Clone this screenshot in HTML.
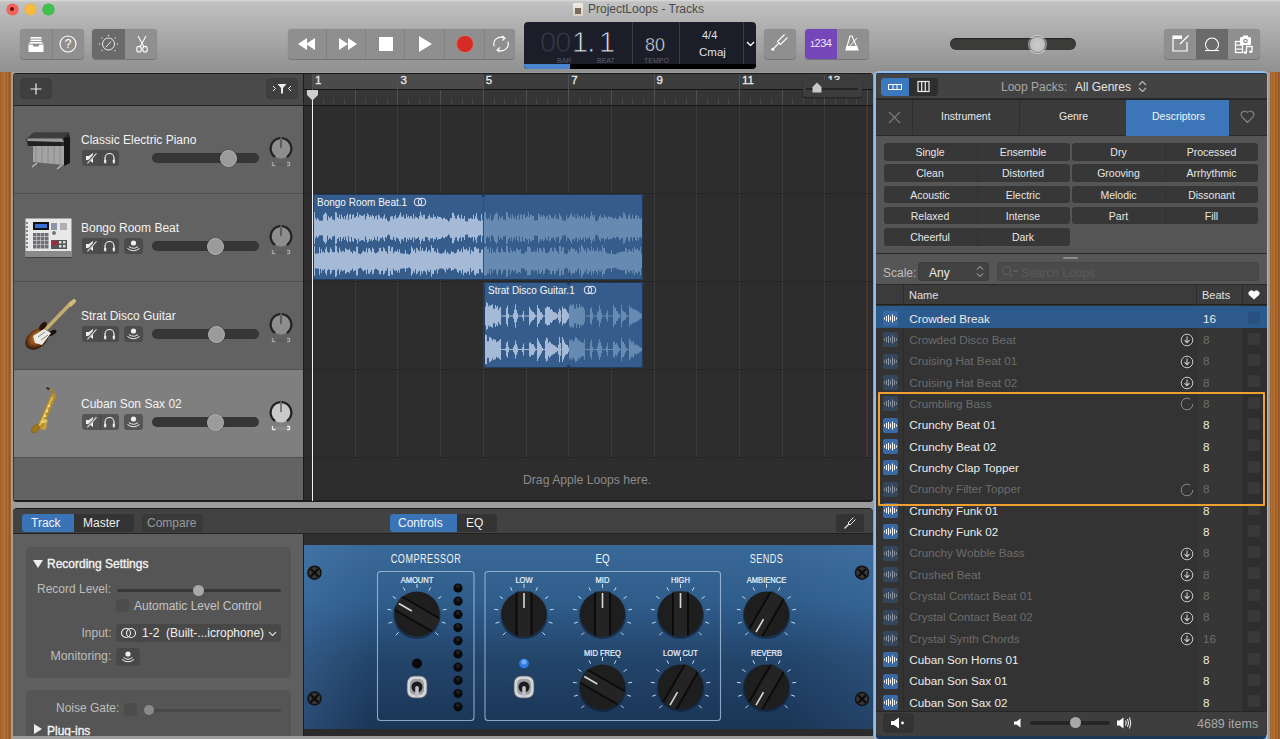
<!DOCTYPE html>
<html><head><meta charset="utf-8">
<style>
*{box-sizing:border-box;margin:0;padding:0}
html,body{width:1280px;height:739px;overflow:hidden;background:#9c9c9c;font-family:"Liberation Sans",sans-serif}
.a{position:absolute}
#tb{left:0;top:0;width:1280px;height:72px;background:linear-gradient(#dadada,#c3c3c3 2px,#bebebe 6px,#909090 72px)}
.wood{background:linear-gradient(90deg,#9a5a26,#b06e34 15%,#a0622c 28%,#bc7838 40%,#9c5c28 55%,#b27034 70%,#955624 85%,#a96a30)}
.btn{background:#8c8c8c;border-radius:4px}
.grp{background:#8f8f8f;border-radius:4px;box-shadow:0 0.5px 1px rgba(0,0,0,.25)}
.sep{background:#828282;width:1px}
.w{color:#fff}
</style></head><body>
<!-- toolbar -->
<div id="tb" class="a">
  <div class="a" style="left:6.5px;top:3.5px;width:11px;height:11px;border-radius:50%;background:#f4625c;box-shadow:0 0 0 0.6px #e4665e"><div class="a" style="left:3.5px;top:3.5px;width:4px;height:4px;border-radius:50%;background:#6a0c08"></div></div>
  <div class="a" style="left:24.5px;top:3.5px;width:11px;height:11px;border-radius:50%;background:#f7bb3e;box-shadow:0 0 0 0.6px #e8ac3a"></div>
  <div class="a" style="left:42.5px;top:3.5px;width:11px;height:11px;border-radius:50%;background:#3fc14c;box-shadow:0 0 0 0.6px #3aae44"></div>
  <div class="a" style="left:588px;top:2px;font-size:12px;color:#4a4a4a">ProjectLoops - Tracks</div>
  <div class="a" style="left:573px;top:3px;width:10px;height:13px;background:linear-gradient(#f0ece6,#d8d0c4);border-radius:1px"><div class="a" style="left:2px;top:5px;width:6px;height:6px;background:#7a6a5a"></div></div>
  <!-- group1 -->
  <div class="a grp" style="left:20px;top:29px;width:64px;height:30px"></div>
  <div class="a sep" style="left:52px;top:29px;height:30px"></div>
  <svg class="a" style="left:28px;top:35px" width="16" height="18" viewBox="0 0 16 18"><path d="M2 2h12v4H2zM1 7h14v10H1z" fill="none"/><rect x="2.5" y="2" width="11" height="1.6" fill="#fff"/><rect x="2.5" y="4.5" width="11" height="1.6" fill="#fff"/><rect x="1.5" y="7" width="13" height="1.6" fill="#fff"/><path d="M0.5 9.5h4l1 2h5l1-2h4v7.5h-15z" fill="#fff"/></svg>
  <svg class="a" style="left:59px;top:35px" width="18" height="18" viewBox="0 0 18 18"><circle cx="9" cy="9" r="8" fill="none" stroke="#fff" stroke-width="1.1"/><text x="9" y="13.2" text-anchor="middle" font-size="12" fill="#fff" font-family="Liberation Sans">?</text></svg>
  <!-- group2 -->
  <div class="a grp" style="left:92px;top:29px;width:65px;height:30px"></div>
  <div class="a" style="left:92px;top:29px;width:33px;height:30px;background:#6a6a6a;border-radius:4px 0 0 4px"></div>
  <svg class="a" style="left:98px;top:34px" width="22" height="20" viewBox="0 0 22 20"><circle cx="10.5" cy="10" r="6" fill="none" stroke="#eee" stroke-width="1"/><path d="M8 13L13 7.5" stroke="#eee" stroke-width="1"/><g fill="#ddd"><circle cx="10.5" cy="1.5" r=".7"/><circle cx="4" cy="4" r=".7"/><circle cx="17" cy="4" r=".7"/><circle cx="1.5" cy="10" r=".7"/><circle cx="19.5" cy="10" r=".7"/><circle cx="4" cy="16.5" r=".7"/><circle cx="17" cy="16.5" r=".7"/></g></svg>
  <svg class="a" style="left:135px;top:35px" width="14" height="18" viewBox="0 0 14 18"><path d="M3 1L9 12M11 1L5 12" stroke="#fff" stroke-width="1.1" fill="none"/><ellipse cx="4" cy="14.2" rx="2.3" ry="2.8" fill="none" stroke="#fff" stroke-width="1.1"/><ellipse cx="10" cy="14.2" rx="2.3" ry="2.8" fill="none" stroke="#fff" stroke-width="1.1"/></svg>
  <!-- transport -->
  <div class="a grp" style="left:288px;top:29px;width:227px;height:30px"></div>
  <div class="a sep" style="left:326px;top:29px;height:30px"></div>
  <div class="a sep" style="left:365px;top:29px;height:30px"></div>
  <div class="a sep" style="left:404px;top:29px;height:30px"></div>
  <div class="a sep" style="left:444px;top:29px;height:30px"></div>
  <div class="a sep" style="left:484px;top:29px;height:30px"></div>
  <svg class="a" style="left:298px;top:38px" width="20" height="12" viewBox="0 0 20 12"><path d="M0 6L9 0V12zM8 6L17 0V12z" fill="#fff"/></svg>
  <svg class="a" style="left:339px;top:38px" width="20" height="12" viewBox="0 0 20 12"><path d="M0 0L9 6L0 12zM9 0L18 6L9 12z" fill="#fff"/></svg>
  <div class="a" style="left:379px;top:37px;width:14px;height:14px;background:#fff"></div>
  <svg class="a" style="left:419px;top:36px" width="14" height="16" viewBox="0 0 14 16"><path d="M0 0L13 8L0 16z" fill="#fff"/></svg>
  <div class="a" style="left:456.5px;top:36px;width:16px;height:16px;border-radius:50%;background:#d62c25;box-shadow:0 0 0 1px rgba(235,110,95,.6)"></div>
  <svg class="a" style="left:491px;top:35px" width="20" height="18" viewBox="0 0 20 18"><path d="M3.2 11.5A7 7 0 0 1 13 3M16.8 6.5A7 7 0 0 1 7 15" fill="none" stroke="#fff" stroke-width="1.1"/><path d="M11 1L14 3L11.5 5.5M9 12.5L6 15L8.5 17" fill="none" stroke="#fff" stroke-width="1.1"/></svg>
  <!-- LCD -->
  <div class="a" style="left:524px;top:22px;width:232px;height:47px;background:#1b1d29;border-radius:4px;overflow:hidden">
    <div class="a" style="left:0;top:42px;width:232px;height:5px;background:#000"></div>
    <div class="a" style="left:0;top:42px;width:46px;height:5px;background:#4a86d0"></div>
    <div class="a" style="left:108px;top:0;width:1px;height:42px;background:#3a3c48"></div>
    <div class="a" style="left:155px;top:0;width:1px;height:42px;background:#3a3c48"></div>
    <div class="a" style="left:219px;top:0;width:1px;height:42px;background:#3a3c48"></div>
    <div class="a" style="left:16px;top:4px;font-size:29px;color:#383b4a;letter-spacing:-1px;-webkit-text-stroke:0.9px #1b1d29">00</div>
    <div class="a" style="left:48px;top:4px;font-size:29px;color:#dde1ec;letter-spacing:-1px;-webkit-text-stroke:0.9px #1b1d29">1.</div>
    <div class="a" style="left:75px;top:4px;font-size:29px;color:#dde1ec;-webkit-text-stroke:0.9px #1b1d29">1</div>
    <div class="a" style="left:33px;top:35px;font-size:7px;color:#5c5f6c">BAR</div>
    <div class="a" style="left:73px;top:35px;font-size:7px;color:#5c5f6c">BEAT</div>
    <div class="a" style="left:120px;top:35px;font-size:7px;color:#5c5f6c">TEMPO</div>
    <div class="a" style="left:121px;top:13px;font-size:18px;color:#e4e7ef;-webkit-text-stroke:0.5px #1b1d29">80</div>
    <div class="a" style="left:178px;top:7px;font-size:11px;color:#dfe2ea">4/4</div>
    <div class="a" style="left:175px;top:24px;font-size:11.5px;color:#dfe2ea">Cmaj</div>
    <svg class="a" style="left:222px;top:19px" width="9" height="6" viewBox="0 0 9 6"><path d="M1 1L4.5 4.5L8 1" fill="none" stroke="#fff" stroke-width="1.3"/></svg>
  </div>
  <!-- tuner -->
  <div class="a grp" style="left:764px;top:29px;width:32px;height:30px"></div>
  <svg class="a" style="left:771px;top:33px" width="18" height="20" viewBox="0 0 18 20"><path d="M1.5 16.5L8 10" stroke="#fff" stroke-width="1.1"/><circle cx="1.8" cy="16.3" r="1.5" fill="#fff"/><path d="M8 10L6.5 8.5L13.5 1.5M8 10L9.5 11.5L16.5 4.5" fill="none" stroke="#fff" stroke-width="1.1"/></svg>
  <!-- count-in / metronome -->
  <div class="a grp" style="left:805px;top:29px;width:64px;height:30px"></div>
  <div class="a" style="left:805px;top:29px;width:32px;height:30px;background:#7446b8;border-radius:4px 0 0 4px"></div>
  <div class="a" style="left:810px;top:37px;font-size:11px;color:#f0e8ff;letter-spacing:-0.5px"><span style="font-size:9px">1</span>2<span>3</span>4</div>
  <svg class="a" style="left:845px;top:35px" width="14" height="16" viewBox="0 0 14 16"><path d="M5 1H7L13 15H1z" fill="none" stroke="#fff" stroke-width="1.1"/><path d="M1.5 11H12.5L13 15H1z" fill="#fff"/><path d="M4 12L12 3" stroke="#fff" stroke-width="1"/></svg>
  <!-- master volume -->
  <div class="a" style="left:950px;top:38px;width:126px;height:12px;background:#3b3c39;border-radius:6px;box-shadow:inset 0 1px 1px rgba(0,0,0,.4)"></div>
  <div class="a" style="left:1029px;top:36px;width:17px;height:17px;border-radius:50%;background:radial-gradient(#cdcdcd,#b8b8b8);border:1px solid #8a8a8a;box-shadow:0 0 0 1px rgba(255,255,255,.5)"></div>
  <!-- right group -->
  <div class="a grp" style="left:1164px;top:29px;width:96px;height:30px"></div>
  <div class="a" style="left:1196px;top:29px;width:32px;height:30px;background:#6a6a6a"></div>
  <svg class="a" style="left:1171px;top:34px" width="20" height="20" viewBox="0 0 20 20"><path d="M11 2H2V17H16V8" fill="none" stroke="#fff" stroke-width="1.2"/><rect x="2" y="2" width="9" height="3" fill="#fff"/><path d="M9 10L17.5 1.5" stroke="#fff" stroke-width="1.2"/></svg>
  <svg class="a" style="left:1203px;top:35px" width="18" height="18" viewBox="0 0 18 18"><path d="M5.5 15A6.5 6.5 0 1 1 12.5 15" fill="none" stroke="#fff" stroke-width="1.1"/><path d="M2 15.5H16" stroke="#fff" stroke-width="1.1"/></svg>
  <svg class="a" style="left:1232px;top:33px" width="24" height="22" viewBox="0 0 24 22"><rect x="3.5" y="8.5" width="7" height="11" fill="none" stroke="#fff" stroke-width="1.3"/><rect x="3" y="11.5" width="8" height="1.2" fill="#fff"/><rect x="3" y="15.5" width="8" height="1.2" fill="#fff"/><rect x="8" y="4" width="11" height="8" rx="1.2" fill="#fff"/><rect x="11" y="2.5" width="5" height="2" fill="#fff"/><circle cx="13.5" cy="8" r="2.3" fill="#8f8f8f"/><circle cx="13.5" cy="8" r="1.1" fill="#fff"/><path d="M14.5 19.5V13.5H20V18.5" fill="none" stroke="#fff" stroke-width="1.3"/><ellipse cx="13.3" cy="19.6" rx="1.7" ry="1.3" fill="#fff"/><ellipse cx="18.8" cy="18.7" rx="1.7" ry="1.3" fill="#fff"/></svg>

</div>
<!-- TRACKS -->
<div class="a" style="left:13px;top:73px;width:860px;height:429px;background:#2c2c2c;border-radius:4px 4px 4px 4px;overflow:hidden">
<div class="a" style="left:0;top:0;width:290px;height:428px;background:#626262"></div>
<div class="a" style="left:0;top:0;width:290px;height:32px;background:#4a4a4a;border-top:1px solid #1a1a1a"></div>
<div class="a" style="left:8px;top:6px;width:30px;height:18.5px;background:#3f3f3f;border-radius:3px;box-shadow:0 0 0 0.5px #333"></div>
<svg class="a" style="left:17px;top:9.5px" width="12" height="12" viewBox="0 0 12 12"><path d="M6 0.5V11.5M0.5 6H11.5" stroke="#eee" stroke-width="1.2"/></svg>
<div class="a" style="left:254px;top:6px;width:30px;height:18.5px;background:#3f3f3f;border-radius:3px;box-shadow:0 0 0 0.5px #333"></div>
<svg class="a" style="left:259px;top:10px" width="20" height="11" viewBox="0 0 20 11"><path d="M1 3L3.5 5.5L1 8M19 3L16.5 5.5L19 8" fill="none" stroke="#eee" stroke-width="1"/><path d="M5.5 1H14.5L11 5V10.5H9V5z" fill="#eee"/></svg>
<div class="a" style="left:0;top:32px;width:290px;height:88px;background:#626262;border-top:1px solid #222"></div>
<div class="a" style="left:68px;top:60px;font-size:12px;color:#f2f2f2;white-space:nowrap">Classic Electric Piano</div>
<div class="a" style="left:69px;top:77px;width:37px;height:16px;background:#4c4c4c;border-radius:3px"></div>
<div class="a" style="left:87px;top:77px;width:1px;height:16px;background:#444"></div>
<svg class="a" style="left:72px;top:79px" width="13" height="12" viewBox="0 0 13 12"><path d="M1 4H4L8 1V11L4 8H1z" fill="#eee"/><path d="M2 11L11 1" stroke="#626262" stroke-width="2"/><path d="M2.5 11.5L11.5 1.5" stroke="#eee" stroke-width="1"/></svg>
<svg class="a" style="left:90px;top:79px" width="13" height="12" viewBox="0 0 13 12"><path d="M2 10V6A4.5 4.5 0 0 1 11 6V10" fill="none" stroke="#eee" stroke-width="1.2"/><rect x="1.2" y="7.5" width="2" height="4" rx="0.8" fill="#eee"/><rect x="9.8" y="7.5" width="2" height="4" rx="0.8" fill="#eee"/></svg>
<div class="a" style="left:139px;top:80px;width:107px;height:10px;background:#363636;border-radius:5px"></div>
<div class="a" style="left:207px;top:77px;width:17px;height:17px;border-radius:50%;background:#9b9b9b;border:1px solid #b5b5b5;box-shadow:0 0 1px rgba(0,0,0,.5)"></div>
<svg class="a" style="left:254.5px;top:64px" width="26" height="30" viewBox="0 0 26 30"><circle cx="13" cy="11.2" r="10.2" fill="#8e8e8e"/><path d="M7 20A10.4 10.4 0 1 1 19 20" fill="none" stroke="#232323" stroke-width="2.3"/><path d="M13 1V11.2" stroke="#222" stroke-width="0.9"/><path d="M13 0.5V2.5" stroke="#bbb" stroke-width="0.9"/><rect x="7" y="26" width="12" height="3" fill="#5c5c5c" rx="1"/><path d="M4.5 25V28.5H7.5M19 25.5H21.5V28.5H19" fill="none" stroke="#a0a0a0" stroke-width="1.3"/></svg>
<div class="a" style="left:0;top:120px;width:290px;height:88px;background:#626262;border-top:1px solid #505050"></div>
<div class="a" style="left:68px;top:148px;font-size:12px;color:#f2f2f2;white-space:nowrap">Bongo Room Beat</div>
<div class="a" style="left:69px;top:165px;width:37px;height:16px;background:#4c4c4c;border-radius:3px"></div>
<div class="a" style="left:87px;top:165px;width:1px;height:16px;background:#444"></div>
<svg class="a" style="left:72px;top:167px" width="13" height="12" viewBox="0 0 13 12"><path d="M1 4H4L8 1V11L4 8H1z" fill="#eee"/><path d="M2 11L11 1" stroke="#626262" stroke-width="2"/><path d="M2.5 11.5L11.5 1.5" stroke="#eee" stroke-width="1"/></svg>
<svg class="a" style="left:90px;top:167px" width="13" height="12" viewBox="0 0 13 12"><path d="M2 10V6A4.5 4.5 0 0 1 11 6V10" fill="none" stroke="#eee" stroke-width="1.2"/><rect x="1.2" y="7.5" width="2" height="4" rx="0.8" fill="#eee"/><rect x="9.8" y="7.5" width="2" height="4" rx="0.8" fill="#eee"/></svg>
<div class="a" style="left:111px;top:165px;width:19px;height:16px;background:#4c4c4c;border-radius:3px"></div>
<svg class="a" style="left:113px;top:166px" width="15" height="14" viewBox="0 0 15 14"><circle cx="7.5" cy="4" r="2.6" fill="#eee"/><path d="M3 7.5Q7.5 11 12 7.5M1.5 9.5Q7.5 14 13.5 9.5" fill="none" stroke="#eee" stroke-width="1"/></svg>
<div class="a" style="left:139px;top:168px;width:107px;height:10px;background:#363636;border-radius:5px"></div>
<div class="a" style="left:194px;top:165px;width:17px;height:17px;border-radius:50%;background:#9b9b9b;border:1px solid #b5b5b5;box-shadow:0 0 1px rgba(0,0,0,.5)"></div>
<svg class="a" style="left:254.5px;top:152px" width="26" height="30" viewBox="0 0 26 30"><circle cx="13" cy="11.2" r="10.2" fill="#8e8e8e"/><path d="M7 20A10.4 10.4 0 1 1 19 20" fill="none" stroke="#232323" stroke-width="2.3"/><path d="M13 1V11.2" stroke="#222" stroke-width="0.9"/><path d="M13 0.5V2.5" stroke="#bbb" stroke-width="0.9"/><rect x="7" y="26" width="12" height="3" fill="#5c5c5c" rx="1"/><path d="M4.5 25V28.5H7.5M19 25.5H21.5V28.5H19" fill="none" stroke="#a0a0a0" stroke-width="1.3"/></svg>
<div class="a" style="left:0;top:208px;width:290px;height:88px;background:#626262;border-top:1px solid #505050"></div>
<div class="a" style="left:68px;top:236px;font-size:12px;color:#f2f2f2;white-space:nowrap">Strat Disco Guitar</div>
<div class="a" style="left:69px;top:253px;width:37px;height:16px;background:#4c4c4c;border-radius:3px"></div>
<div class="a" style="left:87px;top:253px;width:1px;height:16px;background:#444"></div>
<svg class="a" style="left:72px;top:255px" width="13" height="12" viewBox="0 0 13 12"><path d="M1 4H4L8 1V11L4 8H1z" fill="#eee"/><path d="M2 11L11 1" stroke="#626262" stroke-width="2"/><path d="M2.5 11.5L11.5 1.5" stroke="#eee" stroke-width="1"/></svg>
<svg class="a" style="left:90px;top:255px" width="13" height="12" viewBox="0 0 13 12"><path d="M2 10V6A4.5 4.5 0 0 1 11 6V10" fill="none" stroke="#eee" stroke-width="1.2"/><rect x="1.2" y="7.5" width="2" height="4" rx="0.8" fill="#eee"/><rect x="9.8" y="7.5" width="2" height="4" rx="0.8" fill="#eee"/></svg>
<div class="a" style="left:111px;top:253px;width:19px;height:16px;background:#4c4c4c;border-radius:3px"></div>
<svg class="a" style="left:113px;top:254px" width="15" height="14" viewBox="0 0 15 14"><circle cx="7.5" cy="4" r="2.6" fill="#eee"/><path d="M3 7.5Q7.5 11 12 7.5M1.5 9.5Q7.5 14 13.5 9.5" fill="none" stroke="#eee" stroke-width="1"/></svg>
<div class="a" style="left:139px;top:256px;width:107px;height:10px;background:#363636;border-radius:5px"></div>
<div class="a" style="left:195px;top:253px;width:17px;height:17px;border-radius:50%;background:#9b9b9b;border:1px solid #b5b5b5;box-shadow:0 0 1px rgba(0,0,0,.5)"></div>
<svg class="a" style="left:254.5px;top:240px" width="26" height="30" viewBox="0 0 26 30"><circle cx="13" cy="11.2" r="10.2" fill="#8e8e8e"/><path d="M7 20A10.4 10.4 0 1 1 19 20" fill="none" stroke="#232323" stroke-width="2.3"/><path d="M13 1V11.2" stroke="#222" stroke-width="0.9"/><path d="M13 0.5V2.5" stroke="#bbb" stroke-width="0.9"/><rect x="7" y="26" width="12" height="3" fill="#5c5c5c" rx="1"/><path d="M4.5 25V28.5H7.5M19 25.5H21.5V28.5H19" fill="none" stroke="#a0a0a0" stroke-width="1.3"/></svg>
<div class="a" style="left:0;top:296px;width:290px;height:88px;background:#7f7f7f;border-top:1px solid #505050"></div>
<div class="a" style="left:68px;top:324px;font-size:12px;color:#f2f2f2;white-space:nowrap">Cuban Son Sax 02</div>
<div class="a" style="left:69px;top:341px;width:37px;height:16px;background:#555;border-radius:3px"></div>
<div class="a" style="left:87px;top:341px;width:1px;height:16px;background:#444"></div>
<svg class="a" style="left:72px;top:343px" width="13" height="12" viewBox="0 0 13 12"><path d="M1 4H4L8 1V11L4 8H1z" fill="#eee"/><path d="M2 11L11 1" stroke="#7f7f7f" stroke-width="2"/><path d="M2.5 11.5L11.5 1.5" stroke="#eee" stroke-width="1"/></svg>
<svg class="a" style="left:90px;top:343px" width="13" height="12" viewBox="0 0 13 12"><path d="M2 10V6A4.5 4.5 0 0 1 11 6V10" fill="none" stroke="#eee" stroke-width="1.2"/><rect x="1.2" y="7.5" width="2" height="4" rx="0.8" fill="#eee"/><rect x="9.8" y="7.5" width="2" height="4" rx="0.8" fill="#eee"/></svg>
<div class="a" style="left:111px;top:341px;width:19px;height:16px;background:#555;border-radius:3px"></div>
<svg class="a" style="left:113px;top:342px" width="15" height="14" viewBox="0 0 15 14"><circle cx="7.5" cy="4" r="2.6" fill="#eee"/><path d="M3 7.5Q7.5 11 12 7.5M1.5 9.5Q7.5 14 13.5 9.5" fill="none" stroke="#eee" stroke-width="1"/></svg>
<div class="a" style="left:139px;top:344px;width:107px;height:10px;background:#363636;border-radius:5px"></div>
<div class="a" style="left:194px;top:341px;width:17px;height:17px;border-radius:50%;background:#9b9b9b;border:1px solid #b5b5b5;box-shadow:0 0 1px rgba(0,0,0,.5)"></div>
<svg class="a" style="left:254.5px;top:328px" width="26" height="30" viewBox="0 0 26 30"><circle cx="13" cy="11.2" r="10.2" fill="#c9c9c9"/><path d="M7 20A10.4 10.4 0 1 1 19 20" fill="none" stroke="#232323" stroke-width="2.3"/><path d="M13 1V11.2" stroke="#222" stroke-width="0.9"/><path d="M13 0.5V2.5" stroke="#bbb" stroke-width="0.9"/><rect x="7" y="26" width="12" height="3" fill="#8a8a8a" rx="1"/><path d="M4.5 25V28.5H7.5M19 25.5H21.5V28.5H19" fill="none" stroke="#e8e8e8" stroke-width="1.3"/></svg>
<div class="a" style="left:0;top:384px;width:290px;height:44px;background:#636363;border-top:1px solid #505050"></div>
<div class="a" style="left:290px;top:0;width:1px;height:428px;background:#1c1c1c"></div>
<div class="a" style="left:291px;top:0;width:569px;height:428px;background:#2d2d2d"></div>
<div class="a" style="left:291px;top:0;width:569px;height:1px;background:#1a1a1a"></div>
<div class="a" style="left:291px;top:1px;width:569px;height:16px;background:#3c3c3c;border-bottom:1px solid #151515"></div>
<div class="a" style="left:299px;top:1px;width:171px;height:16px;background:#4b4b4b;border-bottom:1px solid #151515"></div>
<div class="a" style="left:291px;top:17px;width:569px;height:16px;background:#363636;border-bottom:1px solid #151515"></div>
<div class="a" style="left:299.0px;top:2px;width:1px;height:30px;background:#505050"></div>
<div class="a" style="left:299.0px;top:33px;width:1px;height:351px;background:#3c3c3c"></div>
<div class="a" style="left:302.0px;top:1px;font-size:11.5px;color:#e8e8e8;-webkit-text-stroke:0.3px #e8e8e8">1</div>
<div class="a" style="left:309.7px;top:25px;width:1px;height:6px;background:#464646"></div>
<div class="a" style="left:320.4px;top:25px;width:1px;height:6px;background:#464646"></div>
<div class="a" style="left:331.0px;top:25px;width:1px;height:6px;background:#464646"></div>
<div class="a" style="left:341.7px;top:17px;width:1px;height:15px;background:#505050"></div>
<div class="a" style="left:341.7px;top:33px;width:1px;height:351px;background:#3c3c3c"></div>
<div class="a" style="left:352.4px;top:25px;width:1px;height:6px;background:#464646"></div>
<div class="a" style="left:363.1px;top:25px;width:1px;height:6px;background:#464646"></div>
<div class="a" style="left:373.7px;top:25px;width:1px;height:6px;background:#464646"></div>
<div class="a" style="left:384.4px;top:2px;width:1px;height:30px;background:#505050"></div>
<div class="a" style="left:384.4px;top:33px;width:1px;height:351px;background:#3c3c3c"></div>
<div class="a" style="left:387.4px;top:1px;font-size:11.5px;color:#e8e8e8;-webkit-text-stroke:0.3px #e8e8e8">3</div>
<div class="a" style="left:395.1px;top:25px;width:1px;height:6px;background:#464646"></div>
<div class="a" style="left:405.8px;top:25px;width:1px;height:6px;background:#464646"></div>
<div class="a" style="left:416.4px;top:25px;width:1px;height:6px;background:#464646"></div>
<div class="a" style="left:427.1px;top:17px;width:1px;height:15px;background:#505050"></div>
<div class="a" style="left:427.1px;top:33px;width:1px;height:351px;background:#3c3c3c"></div>
<div class="a" style="left:437.8px;top:25px;width:1px;height:6px;background:#464646"></div>
<div class="a" style="left:448.5px;top:25px;width:1px;height:6px;background:#464646"></div>
<div class="a" style="left:459.1px;top:25px;width:1px;height:6px;background:#464646"></div>
<div class="a" style="left:469.8px;top:2px;width:1px;height:30px;background:#505050"></div>
<div class="a" style="left:469.8px;top:33px;width:1px;height:351px;background:#3c3c3c"></div>
<div class="a" style="left:472.8px;top:1px;font-size:11.5px;color:#e8e8e8;-webkit-text-stroke:0.3px #e8e8e8">5</div>
<div class="a" style="left:480.5px;top:25px;width:1px;height:6px;background:#464646"></div>
<div class="a" style="left:491.2px;top:25px;width:1px;height:6px;background:#464646"></div>
<div class="a" style="left:501.8px;top:25px;width:1px;height:6px;background:#464646"></div>
<div class="a" style="left:512.5px;top:17px;width:1px;height:15px;background:#505050"></div>
<div class="a" style="left:512.5px;top:33px;width:1px;height:351px;background:#3c3c3c"></div>
<div class="a" style="left:523.2px;top:25px;width:1px;height:6px;background:#464646"></div>
<div class="a" style="left:533.9px;top:25px;width:1px;height:6px;background:#464646"></div>
<div class="a" style="left:544.5px;top:25px;width:1px;height:6px;background:#464646"></div>
<div class="a" style="left:555.2px;top:2px;width:1px;height:30px;background:#505050"></div>
<div class="a" style="left:555.2px;top:33px;width:1px;height:351px;background:#3c3c3c"></div>
<div class="a" style="left:558.2px;top:1px;font-size:11.5px;color:#e8e8e8;-webkit-text-stroke:0.3px #e8e8e8">7</div>
<div class="a" style="left:565.9px;top:25px;width:1px;height:6px;background:#464646"></div>
<div class="a" style="left:576.6px;top:25px;width:1px;height:6px;background:#464646"></div>
<div class="a" style="left:587.2px;top:25px;width:1px;height:6px;background:#464646"></div>
<div class="a" style="left:597.9px;top:17px;width:1px;height:15px;background:#505050"></div>
<div class="a" style="left:597.9px;top:33px;width:1px;height:351px;background:#3c3c3c"></div>
<div class="a" style="left:608.6px;top:25px;width:1px;height:6px;background:#464646"></div>
<div class="a" style="left:619.3px;top:25px;width:1px;height:6px;background:#464646"></div>
<div class="a" style="left:629.9px;top:25px;width:1px;height:6px;background:#464646"></div>
<div class="a" style="left:640.6px;top:2px;width:1px;height:30px;background:#505050"></div>
<div class="a" style="left:640.6px;top:33px;width:1px;height:351px;background:#3c3c3c"></div>
<div class="a" style="left:643.6px;top:1px;font-size:11.5px;color:#e8e8e8;-webkit-text-stroke:0.3px #e8e8e8">9</div>
<div class="a" style="left:651.3px;top:25px;width:1px;height:6px;background:#464646"></div>
<div class="a" style="left:662.0px;top:25px;width:1px;height:6px;background:#464646"></div>
<div class="a" style="left:672.6px;top:25px;width:1px;height:6px;background:#464646"></div>
<div class="a" style="left:683.3px;top:17px;width:1px;height:15px;background:#505050"></div>
<div class="a" style="left:683.3px;top:33px;width:1px;height:351px;background:#3c3c3c"></div>
<div class="a" style="left:694.0px;top:25px;width:1px;height:6px;background:#464646"></div>
<div class="a" style="left:704.6px;top:25px;width:1px;height:6px;background:#464646"></div>
<div class="a" style="left:715.3px;top:25px;width:1px;height:6px;background:#464646"></div>
<div class="a" style="left:726.0px;top:2px;width:1px;height:30px;background:#505050"></div>
<div class="a" style="left:726.0px;top:33px;width:1px;height:351px;background:#3c3c3c"></div>
<div class="a" style="left:729.0px;top:1px;font-size:11.5px;color:#e8e8e8;-webkit-text-stroke:0.3px #e8e8e8">11</div>
<div class="a" style="left:736.7px;top:25px;width:1px;height:6px;background:#464646"></div>
<div class="a" style="left:747.4px;top:25px;width:1px;height:6px;background:#464646"></div>
<div class="a" style="left:758.0px;top:25px;width:1px;height:6px;background:#464646"></div>
<div class="a" style="left:768.7px;top:17px;width:1px;height:15px;background:#505050"></div>
<div class="a" style="left:768.7px;top:33px;width:1px;height:351px;background:#3c3c3c"></div>
<div class="a" style="left:779.4px;top:25px;width:1px;height:6px;background:#464646"></div>
<div class="a" style="left:790.1px;top:25px;width:1px;height:6px;background:#464646"></div>
<div class="a" style="left:800.7px;top:25px;width:1px;height:6px;background:#464646"></div>
<div class="a" style="left:811.4px;top:2px;width:1px;height:30px;background:#505050"></div>
<div class="a" style="left:811.4px;top:33px;width:1px;height:351px;background:#3c3c3c"></div>
<div class="a" style="left:814.4px;top:1px;font-size:11.5px;color:#e8e8e8;-webkit-text-stroke:0.3px #e8e8e8">13</div>
<div class="a" style="left:822.1px;top:25px;width:1px;height:6px;background:#464646"></div>
<div class="a" style="left:832.8px;top:25px;width:1px;height:6px;background:#464646"></div>
<div class="a" style="left:843.4px;top:25px;width:1px;height:6px;background:#464646"></div>
<div class="a" style="left:854.1px;top:17px;width:1px;height:15px;background:#505050"></div>
<div class="a" style="left:854.1px;top:33px;width:1px;height:351px;background:#3c3c3c"></div>
<div class="a" style="left:864.8px;top:25px;width:1px;height:6px;background:#464646"></div>
<div class="a" style="left:875.5px;top:25px;width:1px;height:6px;background:#464646"></div>
<div class="a" style="left:886.1px;top:25px;width:1px;height:6px;background:#464646"></div>
<div class="a" style="left:291px;top:120px;width:569px;height:1px;background:#262626"></div>
<div class="a" style="left:291px;top:208px;width:569px;height:1px;background:#262626"></div>
<div class="a" style="left:291px;top:296px;width:569px;height:1px;background:#262626"></div>
<div class="a" style="left:291px;top:384px;width:569px;height:1px;background:#262626"></div>
<div class="a" style="left:510px;top:399.5px;font-size:12.2px;color:#8a8a8a">Drag Apple Loops here.</div>
<div class="a" style="left:790px;top:7px;width:59px;height:17px;background:#3d3d3d;border-radius:3px;box-shadow:0 1px 2px rgba(0,0,0,.4)"></div>
<div class="a" style="left:793px;top:15px;width:52px;height:2px;background:#262626"></div>
<svg class="a" style="left:799px;top:9px" width="10" height="11" viewBox="0 0 10 11"><path d="M0.5 5L5 0.5L9.5 5V10.5H0.5z" fill="#c8c8c8"/></svg>
<div class="a" style="left:853px;top:33px;width:1px;height:351px;background:#4a3030"></div>
<div class="a" style="left:0;top:427px;width:860px;height:2px;background:#1c1c1c"></div>
<div class="a" style="left:0;top:0;width:1px;height:429px;background:#3a3a3a"></div>
</div>
<!-- /TRACKS -->
<!-- ICONS -->
<!-- piano -->
<svg class="a" style="left:24px;top:130px" width="48" height="40" viewBox="0 0 48 40">
<path d="M2 9L10 2.5H45L46 8L40 16H4z" fill="#2e2e30"/>
<path d="M2 9L10 3H44L38 10z" fill="#3e3e42"/>
<path d="M3 8.5H38L40 12H4z" fill="#9a9a9a"/>
<path d="M4 11L38 12V16H4z" fill="#222"/>
<path d="M9 16H40V35L9 32z" fill="#a3a3a3"/>
<path d="M12 16V32M18 16V33M24 16V33.5M30 16V34M36 16V34.5" stroke="#8a8a8a" stroke-width="1"/>
<path d="M40 8L46 7V33L40 36z" fill="#151515"/>
<path d="M13 33L8 37M38 35L33 39" stroke="#bdbdbd" stroke-width="1.3"/>
</svg>
<!-- mpc -->
<svg class="a" style="left:25px;top:218px" width="47" height="40" viewBox="0 0 47 40">
<rect x="0.5" y="0.5" width="46" height="33" fill="#e8e8e8"/>
<rect x="0" y="33" width="47" height="6" fill="#8a8a8a"/>
<rect x="0" y="39" width="47" height="1" fill="#333" opacity=".6"/>
<rect x="8" y="4" width="16" height="8" fill="#111"/>
<rect x="10" y="6" width="12" height="4" fill="#3a6fd8"/>
<rect x="26" y="5" width="6" height="7" fill="#8c96a8"/>
<rect x="35" y="5" width="7" height="7" fill="#b0b0b0"/>
<g fill="#707074"><rect x="8" y="15" width="3.5" height="3.5"/><rect x="12" y="15" width="3.5" height="3.5"/><rect x="16" y="15" width="3.5" height="3.5"/><rect x="20" y="15" width="3.5" height="3.5"/>
<rect x="8" y="19" width="3.5" height="3.5"/><rect x="12" y="19" width="3.5" height="3.5"/><rect x="16" y="19" width="3.5" height="3.5"/><rect x="20" y="19" width="3.5" height="3.5"/>
<rect x="8" y="23" width="3.5" height="3.5"/><rect x="12" y="23" width="3.5" height="3.5"/><rect x="16" y="23" width="3.5" height="3.5"/><rect x="20" y="23" width="3.5" height="3.5"/>
<rect x="8" y="27" width="3.5" height="3.5"/><rect x="12" y="27" width="3.5" height="3.5"/><rect x="16" y="27" width="3.5" height="3.5"/><rect x="20" y="27" width="3.5" height="3.5"/></g>
<circle cx="29" cy="15" r="2" fill="#777"/>
<rect x="26" y="22" width="16" height="9" fill="#555"/>
<rect x="27" y="23" width="6" height="4" fill="#a02a3a"/>
<g fill="#ddd"><rect x="34" y="23" width="2.5" height="2.5"/><rect x="38" y="23" width="2.5" height="2.5"/><rect x="34" y="27" width="2.5" height="2.5"/><rect x="38" y="27" width="2.5" height="2.5"/></g>
<path d="M2 4V30" stroke="#666" stroke-width="1.5" stroke-dasharray="2 2"/>
</svg>
<!-- guitar -->
<svg class="a" style="left:20px;top:297px" width="56" height="58" viewBox="0 0 56 58">
<defs><radialGradient id="sb" cx="0.55" cy="0.45" r="0.6"><stop offset="0" stop-color="#d0893c"/><stop offset="0.55" stop-color="#8a4a1c"/><stop offset="1" stop-color="#1e0e06"/></radialGradient></defs>
<path d="M26 32L51 6" stroke="#c4ad6c" stroke-width="3.6" stroke-linecap="round"/>
<path d="M48 7L54 1.5L57 4L51 10z" fill="#d2bb78"/>
<ellipse cx="17" cy="42" rx="13" ry="9" transform="rotate(-38 17 42)" fill="url(#sb)"/>
<ellipse cx="23" cy="29" rx="5" ry="2.6" transform="rotate(-50 23 29)" fill="#2a1408"/>
<ellipse cx="32" cy="36" rx="5" ry="2.2" transform="rotate(-30 32 36)" fill="#1e0e06"/>
<path d="M13 39L24 32L31 36L22 48L15 46z" fill="#ecebe4"/>
<path d="M18 40L25 35M21 43L28 38" stroke="#777" stroke-width="0.9"/>
</svg>
<!-- sax -->
<svg class="a" style="left:28px;top:386px" width="30" height="52" viewBox="0 0 30 52">
<path d="M20 2.5Q26 3 25.5 11" fill="none" stroke="#a88428" stroke-width="1.8"/>
<path d="M18.5 2L21.5 3" stroke="#2a2a2a" stroke-width="2"/>
<path d="M25.5 10L12 41" stroke="#b48c2c" stroke-width="5.5" stroke-linecap="round"/>
<path d="M24.5 11L11.5 40" stroke="#e4c45c" stroke-width="1.6"/>
<path d="M12 41Q8 49 4 46Q2 43 6 40L10 38" fill="#a07820" stroke="#8a6418" stroke-width="1"/>
<path d="M14 41Q18 45 17 36" fill="none" stroke="#c9a040" stroke-width="3"/>
<ellipse cx="16.5" cy="35" rx="3" ry="2" fill="#e0c060"/>
<g fill="#f2da80"><circle cx="21" cy="20" r="1.3"/><circle cx="19" cy="25" r="1.3"/><circle cx="17" cy="30" r="1.3"/><circle cx="14" cy="36" r="1.2"/></g>
</svg>

<!-- /ICONS -->
<!-- REGIONS -->
<svg class="a" style="left:313px;top:194px" width="330" height="86" viewBox="313 194 330 86"><defs><clipPath id="cb"><rect x="313" y="194" width="330" height="86" rx="3"/></clipPath></defs><g clip-path="url(#cb)"><rect x="313" y="194" width="330" height="86" fill="#355c8a"/><path d="M313 228.0V212.5H314H314V211.9H315H315V218.1H316H316V219.8H317H317V218.0H318H318V219.2H319H319V220.8H320H320V220.6H321H321V220.9H322H322V220.6H323H323V214.9H324H324V213.7H325H325V212.3H326H326V213.7H327H327V220.2H328H328V216.3H329H329V217.9H330H330V217.2H331H331V215.9H332H332V219.4H333H333V219.4H334H334V220.5H335H335V212.1H336H336V212.5H337H337V217.0H338H338V218.5H339H339V214.7H340H340V219.0H341H341V214.4H342H342V216.9H343H343V218.9H344H344V216.1H345H345V219.4H346H346V215.8H347H347V213.8H348H348V219.8H349H349V214.7H350H350V214.0H351H351V219.0H352H352V215.0H353H353V213.9H354H354V217.5H355H355V217.4H356H356V216.1H357H357V212.2H358H358V217.2H359H359V214.6H360H360V214.9H361H361V215.9H362H362V215.8H363H363V215.5H364H364V214.3H365H365V219.4H366H366V216.2H367H367V213.3H368H368V214.5H369H369V216.9H370H370V215.3H371H371V216.7H372H372V214.8H373H373V215.9H374H374V218.8H375H375V216.2H376H376V215.5H377H377V219.4H378H378V214.4H379H379V215.4H380H380V218.0H381H381V217.8H382H382V219.1H383H383V216.4H384H384V214.6H385H385V218.9H386H386V217.9H387H387V220.4H388H388V221.4H389H389V220.7H390H390V217.0H391H391V215.9H392H392V216.2H393H393V219.3H394H394V216.4H395H395V214.7H396H396V218.6H397H397V217.9H398H398V216.7H399H399V214.7H400H400V212.4H401H401V216.5H402H402V217.0H403H403V214.9H404H404V218.2H405H405V218.5H406H406V214.0H407H407V217.3H408H408V215.7H409H409V218.3H410H410V216.0H411H411V216.4H412H412V218.6H413H413V213.9H414H414V219.1H415H415V216.6H416H416V217.2H417H417V217.8H418H418V218.9H419H419V216.0H420H420V211.7H421H421V215.3H422H422V217.2H423H423V214.7H424H424V214.7H425H425V219.1H426H426V218.9H427H427V218.6H428H428V215.9H429H429V214.5H430H430V217.7H431H431V217.2H432H432V218.0H433H433V214.5H434H434V217.0H435H435V216.8H436H436V219.1H437H437V216.3H438H438V216.8H439H439V216.9H440H440V217.1H441H441V218.0H442H442V219.3H443H443V218.1H444H444V217.5H445H445V219.2H446H446V219.1H447H447V220.3H448H448V221.5H449H449V220.5H450H450V218.1H451H451V217.9H452H452V212.6H453H453V213.0H454H454V215.4H455H455V218.6H456H456V218.8H457H457V215.4H458H458V214.6H459H459V217.4H460H460V218.9H461H461V214.8H462H462V218.4H463H463V218.7H464H464V215.9H465H465V221.1H466H466V221.4H467H467V221.4H468H468V218.6H469H469V219.1H470H470V217.9H471H471V218.4H472H472V218.9H473H473V214.4H474H474V219.1H475H475V216.6H476H476V213.1H477H477V218.8H478H478V220.4H479H479V220.4H480H480V220.9H481H481V214.1H482H482V220.2H483H483V228.0V235.8H482V241.9H481V235.1H480V235.6H479V235.6H478V237.2H477V242.9H476V239.4H475V236.9H474V241.6H473V237.1H472V237.6H471V238.1H470V236.9H469V237.4H468V234.6H467V234.6H466V234.9H465V240.1H464V237.3H463V237.6H462V241.2H461V237.1H460V238.6H459V241.4H458V240.6H457V237.2H456V237.4H455V240.6H454V243.0H453V243.4H452V238.1H451V237.9H450V235.5H449V234.5H448V235.7H447V236.9H446V236.8H445V238.5H444V237.9H443V236.7H442V238.0H441V238.9H440V239.1H439V239.2H438V239.7H437V236.9H436V239.2H435V239.0H434V241.5H433V238.0H432V238.8H431V238.3H430V241.5H429V240.1H428V237.4H427V237.1H426V236.9H425V241.3H424V241.3H423V238.8H422V240.7H421V244.3H420V240.0H419V237.1H418V238.2H417V238.8H416V239.4H415V236.9H414V242.1H413V237.4H412V239.6H411V240.0H410V237.7H409V240.3H408V238.7H407V242.0H406V237.5H405V237.8H404V241.1H403V239.0H402V239.5H401V243.6H400V241.3H399V239.3H398V238.1H397V237.4H396V241.3H395V239.6H394V236.7H393V239.8H392V240.1H391V239.0H390V235.3H389V234.6H388V235.6H387V238.1H386V237.1H385V241.4H384V239.6H383V236.9H382V238.2H381V238.0H380V240.6H379V241.6H378V236.6H377V240.5H376V239.8H375V237.2H374V240.1H373V241.2H372V239.3H371V240.7H370V239.1H369V241.5H368V242.7H367V239.8H366V236.6H365V241.7H364V240.5H363V240.2H362V240.1H361V241.1H360V241.4H359V238.8H358V243.8H357V239.9H356V238.6H355V238.5H354V242.1H353V241.0H352V237.0H351V242.0H350V241.3H349V236.2H348V242.2H347V240.2H346V236.6H345V239.9H344V237.1H343V239.1H342V241.6H341V237.0H340V241.3H339V237.5H338V239.0H337V243.5H336V243.9H335V235.5H334V236.6H333V236.6H332V240.1H331V238.8H330V238.1H329V239.7H328V235.8H327V242.3H326V243.7H325V242.3H324V241.1H323V235.4H322V235.1H321V235.4H320V235.2H319V236.8H318V238.0H317V236.2H316V237.9H315V244.1H314V243.5H313Z" fill="#a4bad6"/><path d="M313 261.0V247.1H314H314V246.2H315H315V253.8H316H316V253.6H317H317V253.2H318H318V253.6H319H319V247.3H320H320V253.3H321H321V249.1H322H322V252.2H323H323V251.4H324H324V253.1H325H325V248.8H326H326V246.7H327H327V251.4H328H328V252.7H329H329V252.2H330H330V247.4H331H331V249.3H332H332V251.9H333H333V252.3H334H334V252.0H335H335V244.9H336H336V245.9H337H337V251.4H338H338V253.1H339H339V247.5H340H340V250.5H341H341V252.3H342H342V250.6H343H343V251.2H344H344V252.0H345H345V248.3H346H346V249.0H347H347V249.9H348H348V249.9H349H349V248.8H350H350V251.3H351H351V251.7H352H352V253.5H353H353V250.8H354H354V251.0H355H355V252.1H356H356V246.6H357H357V246.8H358H358V253.3H359H359V253.8H360H360V254.2H361H361V253.2H362H362V251.6H363H363V250.4H364H364V251.9H365H365V251.5H366H366V247.8H367H367V252.4H368H368V248.5H369H369V248.1H370H370V249.9H371H371V251.9H372H372V247.6H373H373V248.7H374H374V252.3H375H375V253.5H376H376V253.1H377H377V252.1H378H378V251.6H379H379V247.9H380H380V247.4H381H381V251.0H382H382V251.4H383H383V247.2H384H384V248.6H385H385V250.9H386H386V251.5H387H387V253.7H388H388V245.9H389H389V246.0H390H390V251.3H391H391V247.4H392H392V247.1H393H393V253.2H394H394V251.4H395H395V251.0H396H396V251.7H397H397V249.6H398H398V251.9H399H399V249.2H400H400V253.1H401H401V253.5H402H402V253.5H403H403V253.7H404H404V253.5H405H405V250.2H406H406V254.1H407H407V253.6H408H408V254.3H409H409V254.4H410H410V253.3H411H411V246.3H412H412V248.3H413H413V250.7H414H414V249.2H415H415V252.8H416H416V247.8H417H417V248.6H418H418V250.5H419H419V251.2H420H420V246.4H421H421V250.8H422H422V248.2H423H423V251.0H424H424V251.3H425H425V250.3H426H426V247.2H427H427V252.2H428H428V250.4H429H429V249.9H430H430V252.2H431H431V245.2H432H432V248.0H433H433V247.9H434H434V251.6H435H435V251.3H436H436V253.0H437H437V248.4H438H438V252.3H439H439V253.2H440H440V253.4H441H441V253.7H442H442V253.2H443H443V253.1H444H444V251.6H445H445V249.6H446H446V253.5H447H447V252.1H448H448V253.2H449H449V254.2H450H450V253.4H451H451V251.0H452H452V252.1H453H453V251.9H454H454V253.4H455H455V253.2H456H456V252.6H457H457V249.9H458H458V249.0H459H459V251.6H460H460V251.2H461H461V248.4H462H462V252.2H463H463V246.8H464H464V249.2H465H465V249.4H466H466V248.6H467H467V250.4H468H468V250.6H469H469V247.1H470H470V253.7H471H471V249.8H472H472V250.9H473H473V251.9H474H474V247.3H475H475V246.5H476H476V248.4H477H477V248.9H478H478V248.2H479H479V253.0H480H480V252.8H481H481V249.7H482H482V249.3H483H483V261.0V272.7H482V272.3H481V269.2H480V269.0H479V273.8H478V273.1H477V273.6H476V275.5H475V274.7H474V270.1H473V271.1H472V272.2H471V268.3H470V274.9H469V271.4H468V271.6H467V273.4H466V272.6H465V272.8H464V275.2H463V269.8H462V273.6H461V270.8H460V270.4H459V273.0H458V272.1H457V269.4H456V268.8H455V268.6H454V270.1H453V269.9H452V271.0H451V268.6H450V267.8H449V268.8H448V269.9H447V268.5H446V272.4H445V270.4H444V268.9H443V268.8H442V268.3H441V268.6H440V268.8H439V269.7H438V273.6H437V269.0H436V270.7H435V270.4H434V274.1H433V274.0H432V276.8H431V269.8H430V272.1H429V271.6H428V269.8H427V274.8H426V271.7H425V270.7H424V271.0H423V273.8H422V271.2H421V275.6H420V270.8H419V271.5H418V273.4H417V274.2H416V269.2H415V272.8H414V271.3H413V273.7H412V275.7H411V268.7H410V267.6H409V267.7H408V268.4H407V267.9H406V271.8H405V268.5H404V268.3H403V268.5H402V268.5H401V268.9H400V272.8H399V270.1H398V272.4H397V270.3H396V271.0H395V270.6H394V268.8H393V274.9H392V274.6H391V270.7H390V276.0H389V276.1H388V268.3H387V270.5H386V271.1H385V273.4H384V274.8H383V270.6H382V271.0H381V274.6H380V274.1H379V270.4H378V269.9H377V268.9H376V268.5H375V269.7H374V273.3H373V274.4H372V270.1H371V272.1H370V273.9H369V273.5H368V269.6H367V274.2H366V270.5H365V270.1H364V271.6H363V270.4H362V268.8H361V267.8H360V268.2H359V268.7H358V275.2H357V275.4H356V269.9H355V271.0H354V271.2H353V268.5H352V270.3H351V270.7H350V273.2H349V272.1H348V272.1H347V273.0H346V273.7H345V270.0H344V270.8H343V271.4H342V269.7H341V271.5H340V274.5H339V268.9H338V270.6H337V276.1H336V277.1H335V270.0H334V269.7H333V270.1H332V272.7H331V274.6H330V269.8H329V269.3H328V270.6H327V275.3H326V273.2H325V268.9H324V270.6H323V269.8H322V272.9H321V268.7H320V274.7H319V268.4H318V268.8H317V268.4H316V268.2H315V275.8H314V274.9H313Z" fill="#a4bad6"/><path d="M484 228.0V212.5H485H485V211.9H486H486V218.1H487H487V219.8H488H488V218.0H489H489V219.2H490H490V214.3H491H491V220.8H492H492V220.5H493H493V218.7H494H494V214.9H495H495V213.7H496H496V212.3H497H497V213.7H498H498V220.2H499H499V216.3H500H500V217.9H501H501V217.2H502H502V215.9H503H503V219.4H504H504V219.4H505H505V220.5H506H506V212.1H507H507V212.5H508H508V217.0H509H509V218.5H510H510V214.7H511H511V219.0H512H512V214.4H513H513V216.9H514H514V218.9H515H515V216.1H516H516V219.4H517H517V215.8H518H518V213.8H519H519V219.8H520H520V214.7H521H521V214.0H522H522V219.0H523H523V215.0H524H524V213.9H525H525V217.5H526H526V217.4H527H527V216.1H528H528V212.2H529H529V217.2H530H530V214.6H531H531V214.9H532H532V215.9H533H533V215.8H534H534V220.5H535H535V220.2H536H536V220.0H537H537V220.7H538H538V213.3H539H539V214.5H540H540V216.9H541H541V215.3H542H542V216.7H543H543V214.8H544H544V215.9H545H545V218.8H546H546V216.2H547H547V215.5H548H548V219.4H549H549V214.4H550H550V215.4H551H551V218.0H552H552V217.8H553H553V219.1H554H554V216.4H555H555V214.6H556H556V218.9H557H557V217.9H558H558V219.2H559H559V212.9H560H560V215.4H561H561V217.0H562H562V220.5H563H563V220.4H564H564V220.6H565H565V220.8H566H566V214.7H567H567V218.6H568H568V217.9H569H569V216.7H570H570V214.7H571H571V212.4H572H572V216.5H573H573V217.0H574H574V214.9H575H575V218.2H576H576V218.5H577H577V214.0H578H578V217.3H579H579V215.7H580H580V218.3H581H581V216.0H582H582V216.4H583H583V218.6H584H584V213.9H585H585V219.1H586H586V216.6H587H587V217.2H588H588V217.8H589H589V218.9H590H590V216.0H591H591V211.7H592H592V215.3H593H593V217.2H594H594V214.7H595H595V220.4H596H596V221.4H597H597V220.7H598H598V218.6H599H599V215.9H600H600V214.5H601H601V217.7H602H602V217.2H603H603V218.0H604H604V214.5H605H605V217.0H606H606V216.8H607H607V219.1H608H608V216.3H609H609V216.8H610H610V216.9H611H611V217.1H612H612V218.0H613H613V219.3H614H614V218.1H615H615V217.5H616H616V219.2H617H617V219.1H618H618V218.6H619H619V216.1H620H620V216.4H621H621V218.1H622H622V217.9H623H623V212.6H624H624V213.0H625H625V215.4H626H626V218.6H627H627V218.8H628H628V215.4H629H629V214.6H630H630V217.4H631H631V218.9H632H632V214.8H633H633V218.4H634H634V218.7H635H635V215.9H636H636V215.1H637H637V218.4H638H638V215.7H639H639V218.6H640H640V219.1H641H641V217.9H642H642V218.4H643H643V228.0V237.6H642V238.1H641V236.9H640V237.4H639V240.3H638V237.6H637V240.9H636V240.1H635V237.3H634V237.6H633V241.2H632V237.1H631V238.6H630V241.4H629V240.6H628V237.2H627V237.4H626V240.6H625V243.0H624V243.4H623V238.1H622V237.9H621V239.6H620V239.9H619V237.4H618V236.9H617V236.8H616V238.5H615V237.9H614V236.7H613V238.0H612V238.9H611V239.1H610V239.2H609V239.7H608V236.9H607V239.2H606V239.0H605V241.5H604V238.0H603V238.8H602V238.3H601V241.5H600V240.1H599V237.4H598V235.3H597V234.6H596V235.6H595V241.3H594V238.8H593V240.7H592V244.3H591V240.0H590V237.1H589V238.2H588V238.8H587V239.4H586V236.9H585V242.1H584V237.4H583V239.6H582V240.0H581V237.7H580V240.3H579V238.7H578V242.0H577V237.5H576V237.8H575V241.1H574V239.0H573V239.5H572V243.6H571V241.3H570V239.3H569V238.1H568V237.4H567V241.3H566V235.2H565V235.4H564V235.6H563V235.5H562V239.0H561V240.6H560V243.1H559V236.8H558V238.1H557V237.1H556V241.4H555V239.6H554V236.9H553V238.2H552V238.0H551V240.6H550V241.6H549V236.6H548V240.5H547V239.8H546V237.2H545V240.1H544V241.2H543V239.3H542V240.7H541V239.1H540V241.5H539V242.7H538V235.3H537V236.0H536V235.8H535V235.5H534V240.2H533V240.1H532V241.1H531V241.4H530V238.8H529V243.8H528V239.9H527V238.6H526V238.5H525V242.1H524V241.0H523V237.0H522V242.0H521V241.3H520V236.2H519V242.2H518V240.2H517V236.6H516V239.9H515V237.1H514V239.1H513V241.6H512V237.0H511V241.3H510V237.5H509V239.0H508V243.5H507V243.9H506V235.5H505V236.6H504V236.6H503V240.1H502V238.8H501V238.1H500V239.7H499V235.8H498V242.3H497V243.7H496V242.3H495V241.1H494V237.3H493V235.5H492V235.2H491V241.7H490V236.8H489V238.0H488V236.2H487V237.9H486V244.1H485V243.5H484Z" fill="#668ab2"/><path d="M484 261.0V247.1H485H485V246.2H486H486V246.6H487H487V248.9H488H488V248.5H489H489V252.7H490H490V247.3H491H491V253.3H492H492V249.1H493H493V252.2H494H494V251.4H495H495V253.1H496H496V248.8H497H497V246.7H498H498V251.4H499H499V252.7H500H500V252.2H501H501V247.4H502H502V249.3H503H503V251.9H504H504V252.3H505H505V252.0H506H506V244.9H507H507V245.9H508H508V251.4H509H509V253.1H510H510V247.5H511H511V250.5H512H512V252.3H513H513V250.6H514H514V251.2H515H515V252.0H516H516V248.3H517H517V249.0H518H518V249.9H519H519V249.9H520H520V248.8H521H521V253.8H522H522V253.6H523H523V253.2H524H524V253.6H525H525V251.0H526H526V252.1H527H527V246.6H528H528V246.8H529H529V246.8H530H530V247.7H531H531V251.9H532H532V252.0H533H533V251.6H534H534V250.4H535H535V251.9H536H536V251.5H537H537V247.8H538H538V252.4H539H539V248.5H540H540V248.1H541H541V249.9H542H542V251.9H543H543V247.6H544H544V248.7H545H545V252.3H546H546V253.5H547H547V253.1H548H548V252.1H549H549V251.6H550H550V247.9H551H551V247.4H552H552V251.0H553H553V251.4H554H554V247.2H555H555V248.6H556H556V250.9H557H557V251.5H558H558V253.7H559H559V245.9H560H560V246.0H561H561V251.3H562H562V247.4H563H563V247.1H564H564V253.3H565H565V253.8H566H566V254.2H567H567V253.2H568H568V249.6H569H569V251.9H570H570V249.2H571H571V247.1H572H572V248.5H573H573V248.9H574H574V248.5H575H575V251.0H576H576V250.2H577H577V252.2H578H578V254.0H579H579V247.5H580H580V252.0H581H581V244.5H582H582V246.3H583H583V248.3H584H584V250.7H585H585V249.2H586H586V252.8H587H587V247.8H588H588V248.6H589H589V250.5H590H590V251.2H591H591V246.4H592H592V250.8H593H593V248.2H594H594V251.0H595H595V251.3H596H596V250.3H597H597V247.2H598H598V252.2H599H599V250.4H600H600V249.9H601H601V252.2H602H602V245.2H603H603V248.0H604H604V247.9H605H605V251.6H606H606V253.1H607H607V253.5H608H608V253.5H609H609V253.7H610H610V253.5H611H611V250.1H612H612V254.1H613H613V253.6H614H614V254.3H615H615V254.4H616H616V253.3H617H617V253.5H618H618V252.1H619H619V252.8H620H620V252.1H621H621V251.9H622H622V251.0H623H623V252.1H624H624V251.9H625H625V247.8H626H626V248.4H627H627V252.6H628H628V249.9H629H629V249.0H630H630V251.6H631H631V251.2H632H632V248.4H633H633V252.2H634H634V246.8H635H635V249.2H636H636V249.4H637H637V248.6H638H638V250.4H639H639V250.6H640H640V247.1H641H641V253.7H642H642V249.8H643H643V261.0V272.2H642V268.3H641V274.9H640V271.4H639V271.6H638V273.4H637V272.6H636V272.8H635V275.2H634V269.8H633V273.6H632V270.8H631V270.4H630V273.0H629V272.1H628V269.4H627V273.6H626V274.2H625V270.1H624V269.9H623V271.0H622V270.1H621V269.9H620V269.2H619V269.9H618V268.5H617V268.7H616V267.6H615V267.7H614V268.4H613V267.9H612V271.9H611V268.5H610V268.3H609V268.5H608V268.5H607V268.9H606V270.4H605V274.1H604V274.0H603V276.8H602V269.8H601V272.1H600V271.6H599V269.8H598V274.8H597V271.7H596V270.7H595V271.0H594V273.8H593V271.2H592V275.6H591V270.8H590V271.5H589V273.4H588V274.2H587V269.2H586V272.8H585V271.3H584V273.7H583V275.7H582V277.5H581V270.0H580V274.5H579V268.0H578V269.8H577V271.8H576V271.0H575V273.5H574V273.1H573V273.5H572V274.9H571V272.8H570V270.1H569V272.4H568V268.8H567V267.8H566V268.2H565V268.7H564V274.9H563V274.6H562V270.7H561V276.0H560V276.1H559V268.3H558V270.5H557V271.1H556V273.4H555V274.8H554V270.6H553V271.0H552V274.6H551V274.1H550V270.4H549V269.9H548V268.9H547V268.5H546V269.7H545V273.3H544V274.4H543V270.1H542V272.1H541V273.9H540V273.5H539V269.6H538V274.2H537V270.5H536V270.1H535V271.6H534V270.4H533V270.0H532V270.1H531V274.3H530V275.2H529V275.2H528V275.4H527V269.9H526V271.0H525V268.4H524V268.8H523V268.4H522V268.2H521V273.2H520V272.1H519V272.1H518V273.0H517V273.7H516V270.0H515V270.8H514V271.4H513V269.7H512V271.5H511V274.5H510V268.9H509V270.6H508V276.1H507V277.1H506V270.0H505V269.7H504V270.1H503V272.7H502V274.6H501V269.8H500V269.3H499V270.6H498V275.3H497V273.2H496V268.9H495V270.6H494V269.8H493V272.9H492V268.7H491V274.7H490V269.3H489V273.5H488V273.1H487V275.4H486V275.8H485V274.9H484Z" fill="#668ab2"/><rect x="313" y="194" width="330" height="16" fill="#355c8a"/><path d="M483.5 194V280" stroke="#2d4f7a" stroke-width="1"/></g><rect x="313.5" y="194.5" width="329" height="85" rx="3" fill="none" stroke="#1f3a5c" stroke-width="1"/><path d="M480 194L483.5 197.5L487 194z" fill="#1f3a5c"/></svg>
<div class="a" style="left:317px;top:196.5px;font-size:10px;color:#f4f6fa;white-space:nowrap">Bongo Room Beat.1</div>
<svg class="a" style="left:413px;top:197px" width="14" height="10" viewBox="0 0 14 10"><circle cx="5" cy="5" r="3.8" fill="none" stroke="#eef" stroke-width="1"/><circle cx="9" cy="5" r="3.8" fill="none" stroke="#eef" stroke-width="1"/></svg>
<svg class="a" style="left:484px;top:282px" width="159" height="86" viewBox="484 282 159 86"><defs><clipPath id="cs"><rect x="484" y="282" width="159" height="86" rx="3"/></clipPath></defs><g clip-path="url(#cs)"><rect x="484" y="282" width="159" height="86" fill="#355c8a"/><path d="M485 316.0V306.8H486H486V302.3H487H487V303.1H488H488V306.6H489H489V305.3H490H490V305.8H491H491V304.9H492H492V304.3H493H493V308.5H494H494V309.1H495H495V304.9H496H496V307.3H497H497V305.8H498H498V309.9H499H499V307.9H500H500V306.8H501H501V315.5H502H502V315.5H503H503V315.5H504H504V315.5H505H505V315.2H506H506V308.1H507H507V305.6H508H508V313.8H509H509V315.5H510H510V315.5H511H511V315.5H512H512V315.5H513H513V313.6H514H514V309.5H515H515V304.3H516H516V310.1H517H517V313.2H518H518V315.5H519H519V315.5H520H520V315.5H521H521V315.5H522H522V314.2H523H523V311.1H524H524V315.5H525H525V315.5H526H526V315.5H527H527V315.5H528H528V315.5H529H529V306.7H530H530V309.3H531H531V310.4H532H532V311.5H533H533V312.1H534H534V313.6H535H535V315.0H536H536V315.5H537H537V304.9H538H538V308.0H539H539V309.4H540H540V312.3H541H541V312.2H542H542V314.3H543H543V315.5H544H544V315.5H545H545V308.1H546H546V307.5H547H547V306.2H548H548V307.1H549H549V306.9H550H550V309.8H551H551V309.1H552H552V310.4H553H553V312.1H554H554V312.2H555H555V312.4H556H556V313.3H557H557V314.5H558H558V311.6H559H559V308.4H560H560V310.3H561H561V315.5H562H562V306.4H563H563V308.8H564H564V308.2H565H565V308.8H566H566V310.3H567H567V312.3H568H568V313.4H569H569V316.0V318.6H568V319.7H567V321.7H566V323.2H565V323.8H564V323.2H563V325.6H562V316.5H561V321.7H560V323.6H559V320.4H558V317.5H557V318.7H556V319.6H555V319.8H554V319.9H553V321.6H552V322.9H551V322.2H550V325.1H549V324.9H548V325.8H547V324.5H546V323.9H545V316.5H544V316.5H543V317.7H542V319.8H541V319.7H540V322.6H539V324.0H538V327.1H537V316.5H536V317.0H535V318.4H534V319.9H533V320.5H532V321.6H531V322.7H530V325.3H529V316.5H528V316.5H527V316.5H526V316.5H525V316.5H524V320.9H523V317.8H522V316.5H521V316.5H520V316.5H519V316.5H518V318.8H517V321.9H516V327.7H515V322.5H514V318.4H513V316.5H512V316.5H511V316.5H510V316.5H509V318.2H508V326.4H507V323.9H506V316.8H505V316.5H504V316.5H503V316.5H502V316.5H501V325.2H500V324.1H499V322.1H498V326.2H497V324.7H496V327.1H495V322.9H494V323.5H493V327.7H492V327.1H491V326.2H490V326.7H489V325.4H488V328.9H487V329.7H486V325.2H485Z" fill="#a4bad6"/><path d="M485 349.5V334.8H486H486V335.1H487H487V341.2H488H488V341.2H489H489V336.7H490H490V337.6H491H491V338.3H492H492V340.6H493H493V339.1H494H494V339.4H495H495V339.8H496H496V342.2H497H497V341.0H498H498V341.4H499H499V340.0H500H500V339.0H501H501V349.0H502H502V349.0H503H503V349.0H504H504V349.0H505H505V348.3H506H506V343.0H507H507V341.3H508H508V346.8H509H509V349.0H510H510V349.0H511H511V349.0H512H512V349.0H513H513V347.1H514H514V344.9H515H515V340.4H516H516V343.8H517H517V346.4H518H518V349.0H519H519V349.0H520H520V349.0H521H521V349.0H522H522V347.0H523H523V343.4H524H524V349.0H525H525V349.0H526H526V349.0H527H527V349.0H528H528V349.0H529H529V342.8H530H530V342.3H531H531V344.2H532H532V344.1H533H533V344.3H534H534V346.5H535H535V348.4H536H536V349.0H537H537V338.1H538H538V340.5H539H539V342.5H540H540V343.9H541H541V346.1H542H542V347.9H543H543V349.0H544H544V349.0H545H545V340.3H546H546V337.5H547H547V338.5H548H548V343.1H549H549V341.2H550H550V342.2H551H551V343.8H552H552V344.3H553H553V345.2H554H554V344.9H555H555V346.6H556H556V346.8H557H557V348.1H558H558V344.4H559H559V336.7H560H560V343.0H561H561V349.0H562H562V337.0H563H563V339.5H564H564V341.9H565H565V344.1H566H566V344.8H567H567V345.1H568H568V347.3H569H569V349.5V351.7H568V353.9H567V354.2H566V354.9H565V357.1H564V359.5H563V362.0H562V350.0H561V356.0H560V362.3H559V354.6H558V350.9H557V352.2H556V352.4H555V354.1H554V353.8H553V354.7H552V355.2H551V356.8H550V357.8H549V355.9H548V360.5H547V361.5H546V358.7H545V350.0H544V350.0H543V351.1H542V352.9H541V355.1H540V356.5H539V358.5H538V360.9H537V350.0H536V350.6H535V352.5H534V354.7H533V354.9H532V354.8H531V356.7H530V356.2H529V350.0H528V350.0H527V350.0H526V350.0H525V350.0H524V355.6H523V352.0H522V350.0H521V350.0H520V350.0H519V350.0H518V352.6H517V355.2H516V358.6H515V354.1H514V351.9H513V350.0H512V350.0H511V350.0H510V350.0H509V352.2H508V357.7H507V356.0H506V350.7H505V350.0H504V350.0H503V350.0H502V350.0H501V360.0H500V359.0H499V357.6H498V358.0H497V356.8H496V359.2H495V359.6H494V359.9H493V358.4H492V360.7H491V361.4H490V362.3H489V357.8H488V357.8H487V363.9H486V364.2H485Z" fill="#a4bad6"/><path d="M569 316.0V306.1H570H570V304.3H571H571V305.7H572H572V304.4H573H573V304.5H574H574V308.2H575H575V308.7H576H576V304.0H577H577V307.6H578H578V307.9H579H579V304.0H580H580V307.1H581H581V305.4H582H582V307.5H583H583V307.0H584H584V309.5H585H585V315.5H586H586V315.5H587H587V315.5H588H588V315.5H589H589V315.0H590H590V308.3H591H591V307.4H592H592V312.5H593H593V315.5H594H594V315.5H595H595V315.5H596H596V315.5H597H597V312.3H598H598V311.3H599H599V305.3H600H600V309.3H601H601V313.0H602H602V315.5H603H603V315.5H604H604V315.5H605H605V315.5H606H606V313.0H607H607V310.2H608H608V315.5H609H609V315.5H610H610V315.5H611H611V315.5H612H612V315.5H613H613V304.7H614H614V307.0H615H615V307.7H616H616V311.0H617H617V311.3H618H618V313.4H619H619V314.3H620H620V315.5H621H621V304.7H622H622V310.1H623H623V311.2H624H624V312.2H625H625V312.2H626H626V314.7H627H627V315.5H628H628V315.5H629H629V305.2H630H630V307.7H631H631V307.3H632H632V308.6H633H633V309.4H634H634V309.2H635H635V309.9H636H636V309.7H637H637V311.2H638H638V311.4H639H639V312.5H640H640V313.1H641H641V314.3H642H642V312.6H643H643V303.4H644H644V316.0V328.6H643V319.4H642V317.7H641V318.9H640V319.5H639V320.6H638V320.8H637V322.3H636V322.1H635V322.8H634V322.6H633V323.4H632V324.7H631V324.3H630V326.8H629V316.5H628V316.5H627V317.3H626V319.8H625V319.8H624V320.8H623V321.9H622V327.3H621V316.5H620V317.7H619V318.6H618V320.7H617V321.0H616V324.3H615V325.0H614V327.3H613V316.5H612V316.5H611V316.5H610V316.5H609V316.5H608V321.8H607V319.0H606V316.5H605V316.5H604V316.5H603V316.5H602V319.0H601V322.7H600V326.7H599V320.7H598V319.7H597V316.5H596V316.5H595V316.5H594V316.5H593V319.5H592V324.6H591V323.7H590V317.0H589V316.5H588V316.5H587V316.5H586V316.5H585V322.5H584V325.0H583V324.5H582V326.6H581V324.9H580V328.0H579V324.1H578V324.4H577V328.0H576V323.3H575V323.8H574V327.5H573V327.6H572V326.3H571V327.7H570V325.9H569Z" fill="#668ab2"/><path d="M569 349.5V339.7H570H570V340.7H571H571V339.0H572H572V340.8H573H573V341.5H574H574V339.6H575H575V336.8H576H576V337.8H577H577V338.2H578H578V341.5H579H579V340.0H580H580V341.6H581H581V342.3H582H582V342.9H583H583V342.5H584H584V339.3H585H585V349.0H586H586V349.0H587H587V349.0H588H588V349.0H589H589V348.4H590H590V342.1H591H591V339.6H592H592V347.0H593H593V349.0H594H594V349.0H595H595V349.0H596H596V349.0H597H597V346.5H598H598V342.7H599H599V338.9H600H600V341.9H601H601V345.4H602H602V349.0H603H603V349.0H604H604V349.0H605H605V349.0H606H606V346.8H607H607V343.1H608H608V349.0H609H609V349.0H610H610V349.0H611H611V349.0H612H612V349.0H613H613V341.9H614H614V341.6H615H615V344.4H616H616V342.8H617H617V344.6H618H618V346.7H619H619V348.3H620H620V349.0H621H621V338.0H622H622V341.5H623H623V342.0H624H624V344.0H625H625V346.5H626H626V348.2H627H627V349.0H628H628V349.0H629H629V338.8H630H630V340.5H631H631V342.6H632H632V342.5H633H633V341.0H634H634V344.7H635H635V345.2H636H636V344.0H637H637V345.7H638H638V345.8H639H639V346.6H640H640V347.5H641H641V347.6H642H642V346.1H643H643V339.6H644H644V349.5V359.4H643V352.9H642V351.4H641V351.5H640V352.4H639V353.2H638V353.3H637V355.0H636V353.8H635V354.3H634V358.0H633V356.5H632V356.4H631V358.5H630V360.2H629V350.0H628V350.0H627V350.8H626V352.5H625V355.0H624V357.0H623V357.5H622V361.0H621V350.0H620V350.7H619V352.3H618V354.4H617V356.2H616V354.6H615V357.4H614V357.1H613V350.0H612V350.0H611V350.0H610V350.0H609V350.0H608V355.9H607V352.2H606V350.0H605V350.0H604V350.0H603V350.0H602V353.6H601V357.1H600V360.1H599V356.3H598V352.5H597V350.0H596V350.0H595V350.0H594V350.0H593V352.0H592V359.4H591V356.9H590V350.6H589V350.0H588V350.0H587V350.0H586V350.0H585V359.7H584V356.5H583V356.1H582V356.7H581V357.4H580V359.0H579V357.5H578V360.8H577V361.2H576V362.2H575V359.4H574V357.5H573V358.2H572V360.0H571V358.3H570V359.3H569Z" fill="#668ab2"/><rect x="484" y="282" width="160" height="16" fill="#355c8a"/></g><rect x="484.5" y="282.5" width="158" height="85" rx="3" fill="none" stroke="#1f3a5c" stroke-width="1"/><path d="M565 282L568.5 285.5L572 282zM565 368L568.5 364.5L572 368z" fill="#1f3a5c"/></svg>
<div class="a" style="left:488px;top:284.5px;font-size:10px;color:#f4f6fa;white-space:nowrap">Strat Disco Guitar.1</div>
<svg class="a" style="left:583px;top:285px" width="14" height="10" viewBox="0 0 14 10"><circle cx="5" cy="5" r="3.8" fill="none" stroke="#eef" stroke-width="1"/><circle cx="9" cy="5" r="3.8" fill="none" stroke="#eef" stroke-width="1"/></svg>
<div class="a" style="left:312px;top:90px;width:1px;height:411px;background:#f0f0f0"></div>
<svg class="a" style="left:306px;top:89px" width="13" height="12" viewBox="0 0 13 12"><path d="M1 1H12V6L6.5 11.5L1 6z" fill="#cfcfcf"/></svg>
<!-- /REGIONS -->
<!-- BROWSER -->
<div class="a" style="left:874px;top:71px;width:394px;height:670px;border:2px solid #96bce8;border-radius:5px;background:#1e3656"></div>
<div class="a" style="left:876px;top:73px;width:391px;height:663px;background:#343434;border-radius:3px;overflow:hidden">
<div class="a" style="left:0px;top:0px;width:391px;height:26px;background:#434343;border-top:1px solid #1e3656;border-bottom:1px solid #2a2a2a"></div>
<div class="a" style="left:5px;top:5px;width:57px;height:18px;background:#2e2e2e;border-radius:3px"></div>
<div class="a" style="left:5px;top:5px;width:28px;height:18px;background:#3b78bd;border-radius:3px 0 0 3px"></div>
<svg class="a" style="left:12px;top:10px" width="14" height="8" viewBox="0 0 14 8"><rect x="0.5" y="1.5" width="13" height="5" fill="none" stroke="#fff" stroke-width="1"/><path d="M5 1.5V6.5M9 1.5V6.5" stroke="#fff" stroke-width="1"/></svg>
<svg class="a" style="left:41px;top:7px" width="13" height="13" viewBox="0 0 13 13"><rect x="1" y="1.5" width="11" height="10" fill="none" stroke="#eee" stroke-width="1.2"/><path d="M4.7 1.5V11.5M8.3 1.5V11.5" stroke="#eee" stroke-width="1.2"/></svg>
<div class="a" style="left:125px;top:8px;font-size:12px;color:#a9a9a9;white-space:nowrap;line-height:1;">Loop Packs:</div>
<div class="a" style="left:199px;top:8px;font-size:12px;color:#e4e4e4;white-space:nowrap;line-height:1;">All Genres</div>
<svg class="a" style="left:262px;top:7px" width="9" height="13" viewBox="0 0 9 13"><path d="M1 5L4.5 1.5L8 5M1 8L4.5 11.5L8 8" fill="none" stroke="#bbb" stroke-width="1.1"/></svg>
<div class="a" style="left:0px;top:26px;width:391px;height:1px;background:#262626"></div>
<div class="a" style="left:0px;top:27px;width:391px;height:36px;background:#3a3a3a;border-bottom:1px solid #2a2a2a"></div>
<div class="a" style="left:36px;top:27px;width:1px;height:36px;background:#2f2f2f"></div>
<div class="a" style="left:143px;top:27px;width:1px;height:36px;background:#2f2f2f"></div>
<svg class="a" style="left:12px;top:38px" width="13" height="13" viewBox="0 0 13 13"><path d="M1 1L12 12M12 1L1 12" stroke="#7a7a7a" stroke-width="1.1"/></svg>
<div class="a" style="left:65px;top:38px;font-size:10.5px;color:#e8e8e8;white-space:nowrap;line-height:1;">Instrument</div>
<div class="a" style="left:183px;top:38px;font-size:10.5px;color:#e8e8e8;white-space:nowrap;line-height:1;">Genre</div>
<div class="a" style="left:250px;top:27px;width:103px;height:36px;background:#3c76b8"></div>
<div class="a" style="left:276px;top:38px;font-size:10.5px;color:#f0f4fa;white-space:nowrap;line-height:1;">Descriptors</div>
<svg class="a" style="left:364px;top:37px" width="15" height="14" viewBox="0 0 15 14"><path d="M7.5 12.5L2 7A3.2 3.2 0 0 1 7.5 2.5A3.2 3.2 0 0 1 13 7z" fill="none" stroke="#8a8a8a" stroke-width="1.1"/></svg>
<div class="a" style="left:0px;top:63px;width:391px;height:117px;background:#555"></div>
<div class="a" style="left:7.5px;top:70.2px;width:186px;height:17.6px;background:#373737;border-radius:3px"></div>
<div class="a" style="left:100.5px;top:70.2px;width:1px;height:17.6px;background:#313131"></div>
<div class="a" style="left:7.5px;top:74.2px;width:93px;text-align:center;font-size:10.5px;line-height:1;color:#e6e6e6">Single</div>
<div class="a" style="left:100.5px;top:74.2px;width:93px;text-align:center;font-size:10.5px;line-height:1;color:#e6e6e6">Ensemble</div>
<div class="a" style="left:196px;top:70.2px;width:186px;height:17.6px;background:#373737;border-radius:3px"></div>
<div class="a" style="left:289px;top:70.2px;width:1px;height:17.6px;background:#313131"></div>
<div class="a" style="left:196px;top:74.2px;width:93px;text-align:center;font-size:10.5px;line-height:1;color:#e6e6e6">Dry</div>
<div class="a" style="left:289px;top:74.2px;width:93px;text-align:center;font-size:10.5px;line-height:1;color:#e6e6e6">Processed</div>
<div class="a" style="left:7.5px;top:91.4px;width:186px;height:17.6px;background:#373737;border-radius:3px"></div>
<div class="a" style="left:100.5px;top:91.4px;width:1px;height:17.6px;background:#313131"></div>
<div class="a" style="left:7.5px;top:95.4px;width:93px;text-align:center;font-size:10.5px;line-height:1;color:#e6e6e6">Clean</div>
<div class="a" style="left:100.5px;top:95.4px;width:93px;text-align:center;font-size:10.5px;line-height:1;color:#e6e6e6">Distorted</div>
<div class="a" style="left:196px;top:91.4px;width:186px;height:17.6px;background:#373737;border-radius:3px"></div>
<div class="a" style="left:289px;top:91.4px;width:1px;height:17.6px;background:#313131"></div>
<div class="a" style="left:196px;top:95.4px;width:93px;text-align:center;font-size:10.5px;line-height:1;color:#e6e6e6">Grooving</div>
<div class="a" style="left:289px;top:95.4px;width:93px;text-align:center;font-size:10.5px;line-height:1;color:#e6e6e6">Arrhythmic</div>
<div class="a" style="left:7.5px;top:112.6px;width:186px;height:17.6px;background:#373737;border-radius:3px"></div>
<div class="a" style="left:100.5px;top:112.6px;width:1px;height:17.6px;background:#313131"></div>
<div class="a" style="left:7.5px;top:116.6px;width:93px;text-align:center;font-size:10.5px;line-height:1;color:#e6e6e6">Acoustic</div>
<div class="a" style="left:100.5px;top:116.6px;width:93px;text-align:center;font-size:10.5px;line-height:1;color:#e6e6e6">Electric</div>
<div class="a" style="left:196px;top:112.6px;width:186px;height:17.6px;background:#373737;border-radius:3px"></div>
<div class="a" style="left:289px;top:112.6px;width:1px;height:17.6px;background:#313131"></div>
<div class="a" style="left:196px;top:116.6px;width:93px;text-align:center;font-size:10.5px;line-height:1;color:#e6e6e6">Melodic</div>
<div class="a" style="left:289px;top:116.6px;width:93px;text-align:center;font-size:10.5px;line-height:1;color:#e6e6e6">Dissonant</div>
<div class="a" style="left:7.5px;top:133.8px;width:186px;height:17.6px;background:#373737;border-radius:3px"></div>
<div class="a" style="left:100.5px;top:133.8px;width:1px;height:17.6px;background:#313131"></div>
<div class="a" style="left:7.5px;top:137.8px;width:93px;text-align:center;font-size:10.5px;line-height:1;color:#e6e6e6">Relaxed</div>
<div class="a" style="left:100.5px;top:137.8px;width:93px;text-align:center;font-size:10.5px;line-height:1;color:#e6e6e6">Intense</div>
<div class="a" style="left:196px;top:133.8px;width:186px;height:17.6px;background:#373737;border-radius:3px"></div>
<div class="a" style="left:289px;top:133.8px;width:1px;height:17.6px;background:#313131"></div>
<div class="a" style="left:196px;top:137.8px;width:93px;text-align:center;font-size:10.5px;line-height:1;color:#e6e6e6">Part</div>
<div class="a" style="left:289px;top:137.8px;width:93px;text-align:center;font-size:10.5px;line-height:1;color:#e6e6e6">Fill</div>
<div class="a" style="left:7.5px;top:155.0px;width:186px;height:17.6px;background:#373737;border-radius:3px"></div>
<div class="a" style="left:100.5px;top:155.0px;width:1px;height:17.6px;background:#313131"></div>
<div class="a" style="left:7.5px;top:159.0px;width:93px;text-align:center;font-size:10.5px;line-height:1;color:#e6e6e6">Cheerful</div>
<div class="a" style="left:100.5px;top:159.0px;width:93px;text-align:center;font-size:10.5px;line-height:1;color:#e6e6e6">Dark</div>
<div class="a" style="left:0px;top:180px;width:391px;height:1px;background:#2a2a2a"></div>
<div class="a" style="left:0px;top:181px;width:391px;height:31px;background:#565656;border-bottom:1px solid #2a2a2a"></div>
<div class="a" style="left:187px;top:184px;width:15px;height:2px;background:#8a8a8a;border-radius:1px"></div>
<div class="a" style="left:7px;top:194px;font-size:12px;color:#bdbdbd;white-space:nowrap;line-height:1;">Scale:</div>
<div class="a" style="left:42px;top:189px;width:71px;height:19px;background:#424242;border-radius:4px;box-shadow:inset 0 0 0 0.5px #3a3a3a"></div>
<div class="a" style="left:53px;top:194px;font-size:12px;color:#eaeaea;white-space:nowrap;line-height:1;">Any</div>
<svg class="a" style="left:100px;top:192px" width="8" height="13" viewBox="0 0 8 13"><path d="M1 4.5L4 1.5L7 4.5M1 8.5L4 11.5L7 8.5" fill="none" stroke="#bbb" stroke-width="1"/></svg>
<div class="a" style="left:121px;top:189px;width:262px;height:19px;background:#4a4a4a;border-radius:4px;box-shadow:inset 0 0 0 0.5px #404040"></div>
<svg class="a" style="left:125px;top:192px" width="18" height="13" viewBox="0 0 18 13"><circle cx="5.5" cy="5.5" r="4" fill="none" stroke="#5e5e5e" stroke-width="1.1"/><path d="M8.5 8.5L11.5 11.5" stroke="#5e5e5e" stroke-width="1.3"/><path d="M12.5 5L14.5 7L16.5 5" fill="none" stroke="#707070" stroke-width="1"/></svg>
<div class="a" style="left:145px;top:194px;font-size:12px;color:#5a5a5a;white-space:nowrap;line-height:1;">Search Loops</div>
<div class="a" style="left:0px;top:212px;width:391px;height:20px;background:#3b3b3b;border-bottom:1px solid #202020"></div>
<div class="a" style="left:27px;top:212px;width:1px;height:20px;background:#2c2c2c"></div>
<div class="a" style="left:320px;top:212px;width:1px;height:20px;background:#2c2c2c"></div>
<div class="a" style="left:366px;top:212px;width:1px;height:20px;background:#2c2c2c"></div>
<div class="a" style="left:33px;top:217px;font-size:11px;color:#e0e0e0;white-space:nowrap;line-height:1;">Name</div>
<div class="a" style="left:326px;top:217px;font-size:11px;color:#e0e0e0;white-space:nowrap;line-height:1;">Beats</div>
<svg class="a" style="left:372px;top:217px" width="12" height="10" viewBox="0 0 12 10"><path d="M6 9.5L1 5A2.7 2.7 0 0 1 6 1.8A2.7 2.7 0 0 1 11 5z" fill="#fff"/></svg>
<div class="a" style="left:0px;top:232px;width:391px;height:407px;background:#333"></div>
<div class="a" style="left:321px;top:232px;width:45px;height:407px;background:#363636"></div>
<div class="a" style="left:367px;top:232px;width:24px;height:407px;background:#2e2e2e"></div>
<div class="a" style="left:27px;top:232px;width:1px;height:407px;background:#2b2b2b"></div>
<div class="a" style="left:320px;top:232px;width:1px;height:407px;background:#2f2f2f"></div>
<div class="a" style="left:366px;top:232px;width:1px;height:407px;background:#2f2f2f"></div>
<div class="a" style="left:0;top:232.50px;width:391px;height:22.5px;background:#2d5a8c"></div>
<div class="a" style="left:7px;top:238.00px;width:15px;height:15px;background:#3a6aa6;border-radius:2px"></div>
<svg class="a" style="left:7px;top:238.00px;opacity:1" width="15" height="15" viewBox="0 0 15 15"><path d="M1.5 6.5V8.5M3.5 5V10M5.5 4V11M7.5 5.5V9.5M9.5 3.5V11.5M11.5 5V10M13.5 6.5V8.5" stroke="#fff" stroke-width="1"/></svg>
<div class="a" style="left:33.299999999999955px;top:239.8px;font-size:11.7px;color:#ebebeb;white-space:nowrap;line-height:1;">Crowded Break</div>
<div class="a" style="left:327px;top:239.8px;font-size:11.7px;color:#ebebeb;white-space:nowrap;line-height:1;">16</div>
<div class="a" style="left:372px;top:238.50px;width:12px;height:12px;background:#2a5080;border-radius:2.5px"></div>
<div class="a" style="left:7px;top:259.33px;width:15px;height:15px;background:#34465c;border-radius:2px"></div>
<svg class="a" style="left:7px;top:259.33px;opacity:0.45" width="15" height="15" viewBox="0 0 15 15"><path d="M1.5 6.5V8.5M3.5 5V10M5.5 4V11M7.5 5.5V9.5M9.5 3.5V11.5M11.5 5V10M13.5 6.5V8.5" stroke="#fff" stroke-width="1"/></svg>
<div class="a" style="left:33.299999999999955px;top:261.13px;font-size:11.7px;color:#6c6c6c;white-space:nowrap;line-height:1;">Crowded Disco Beat</div>
<div class="a" style="left:327px;top:261.13px;font-size:11.7px;color:#6c6c6c;white-space:nowrap;line-height:1;">8</div>
<div class="a" style="left:372px;top:259.83px;width:12px;height:12px;background:#393939;border-radius:2.5px"></div>
<svg class="a" style="left:304px;top:260.33px" width="14" height="14" viewBox="0 0 14 14"><circle cx="7" cy="7" r="5.8" fill="none" stroke="#c8c8c8" stroke-width="1"/><path d="M7 3.5V9.5M4.5 7.2L7 9.7L9.5 7.2" fill="none" stroke="#c8c8c8" stroke-width="1.1"/></svg>
<div class="a" style="left:7px;top:280.66px;width:15px;height:15px;background:#34465c;border-radius:2px"></div>
<svg class="a" style="left:7px;top:280.66px;opacity:0.45" width="15" height="15" viewBox="0 0 15 15"><path d="M1.5 6.5V8.5M3.5 5V10M5.5 4V11M7.5 5.5V9.5M9.5 3.5V11.5M11.5 5V10M13.5 6.5V8.5" stroke="#fff" stroke-width="1"/></svg>
<div class="a" style="left:33.299999999999955px;top:282.46px;font-size:11.7px;color:#6c6c6c;white-space:nowrap;line-height:1;">Cruising Hat Beat 01</div>
<div class="a" style="left:327px;top:282.46px;font-size:11.7px;color:#6c6c6c;white-space:nowrap;line-height:1;">8</div>
<div class="a" style="left:372px;top:281.16px;width:12px;height:12px;background:#393939;border-radius:2.5px"></div>
<svg class="a" style="left:304px;top:281.66px" width="14" height="14" viewBox="0 0 14 14"><circle cx="7" cy="7" r="5.8" fill="none" stroke="#c8c8c8" stroke-width="1"/><path d="M7 3.5V9.5M4.5 7.2L7 9.7L9.5 7.2" fill="none" stroke="#c8c8c8" stroke-width="1.1"/></svg>
<div class="a" style="left:7px;top:301.99px;width:15px;height:15px;background:#34465c;border-radius:2px"></div>
<svg class="a" style="left:7px;top:301.99px;opacity:0.45" width="15" height="15" viewBox="0 0 15 15"><path d="M1.5 6.5V8.5M3.5 5V10M5.5 4V11M7.5 5.5V9.5M9.5 3.5V11.5M11.5 5V10M13.5 6.5V8.5" stroke="#fff" stroke-width="1"/></svg>
<div class="a" style="left:33.299999999999955px;top:303.79px;font-size:11.7px;color:#6c6c6c;white-space:nowrap;line-height:1;">Cruising Hat Beat 02</div>
<div class="a" style="left:327px;top:303.79px;font-size:11.7px;color:#6c6c6c;white-space:nowrap;line-height:1;">8</div>
<div class="a" style="left:372px;top:302.49px;width:12px;height:12px;background:#393939;border-radius:2.5px"></div>
<svg class="a" style="left:304px;top:302.99px" width="14" height="14" viewBox="0 0 14 14"><circle cx="7" cy="7" r="5.8" fill="none" stroke="#c8c8c8" stroke-width="1"/><path d="M7 3.5V9.5M4.5 7.2L7 9.7L9.5 7.2" fill="none" stroke="#c8c8c8" stroke-width="1.1"/></svg>
<div class="a" style="left:7px;top:323.32px;width:15px;height:15px;background:#34465c;border-radius:2px"></div>
<svg class="a" style="left:7px;top:323.32px;opacity:0.45" width="15" height="15" viewBox="0 0 15 15"><path d="M1.5 6.5V8.5M3.5 5V10M5.5 4V11M7.5 5.5V9.5M9.5 3.5V11.5M11.5 5V10M13.5 6.5V8.5" stroke="#fff" stroke-width="1"/></svg>
<div class="a" style="left:33.299999999999955px;top:325.12px;font-size:11.7px;color:#6c6c6c;white-space:nowrap;line-height:1;">Crumbling Bass</div>
<div class="a" style="left:327px;top:325.12px;font-size:11.7px;color:#6c6c6c;white-space:nowrap;line-height:1;">8</div>
<div class="a" style="left:372px;top:323.82px;width:12px;height:12px;background:#393939;border-radius:2.5px"></div>
<svg class="a" style="left:304px;top:324.32px" width="14" height="14" viewBox="0 0 14 14"><circle cx="7" cy="7" r="5.8" fill="none" stroke="#8a8a8a" stroke-width="1" stroke-dasharray="30 6"/></svg>
<div class="a" style="left:7px;top:344.65px;width:15px;height:15px;background:#3a6aa6;border-radius:2px"></div>
<svg class="a" style="left:7px;top:344.65px;opacity:1" width="15" height="15" viewBox="0 0 15 15"><path d="M1.5 6.5V8.5M3.5 5V10M5.5 4V11M7.5 5.5V9.5M9.5 3.5V11.5M11.5 5V10M13.5 6.5V8.5" stroke="#fff" stroke-width="1"/></svg>
<div class="a" style="left:33.299999999999955px;top:346.45px;font-size:11.7px;color:#ebebeb;white-space:nowrap;line-height:1;">Crunchy Beat 01</div>
<div class="a" style="left:327px;top:346.45px;font-size:11.7px;color:#ebebeb;white-space:nowrap;line-height:1;">8</div>
<div class="a" style="left:372px;top:345.15px;width:12px;height:12px;background:#393939;border-radius:2.5px"></div>
<div class="a" style="left:7px;top:365.98px;width:15px;height:15px;background:#3a6aa6;border-radius:2px"></div>
<svg class="a" style="left:7px;top:365.98px;opacity:1" width="15" height="15" viewBox="0 0 15 15"><path d="M1.5 6.5V8.5M3.5 5V10M5.5 4V11M7.5 5.5V9.5M9.5 3.5V11.5M11.5 5V10M13.5 6.5V8.5" stroke="#fff" stroke-width="1"/></svg>
<div class="a" style="left:33.299999999999955px;top:367.78000000000003px;font-size:11.7px;color:#ebebeb;white-space:nowrap;line-height:1;">Crunchy Beat 02</div>
<div class="a" style="left:327px;top:367.78000000000003px;font-size:11.7px;color:#ebebeb;white-space:nowrap;line-height:1;">8</div>
<div class="a" style="left:372px;top:366.48px;width:12px;height:12px;background:#393939;border-radius:2.5px"></div>
<div class="a" style="left:7px;top:387.31px;width:15px;height:15px;background:#3a6aa6;border-radius:2px"></div>
<svg class="a" style="left:7px;top:387.31px;opacity:1" width="15" height="15" viewBox="0 0 15 15"><path d="M1.5 6.5V8.5M3.5 5V10M5.5 4V11M7.5 5.5V9.5M9.5 3.5V11.5M11.5 5V10M13.5 6.5V8.5" stroke="#fff" stroke-width="1"/></svg>
<div class="a" style="left:33.299999999999955px;top:389.11px;font-size:11.7px;color:#ebebeb;white-space:nowrap;line-height:1;">Crunchy Clap Topper</div>
<div class="a" style="left:327px;top:389.11px;font-size:11.7px;color:#ebebeb;white-space:nowrap;line-height:1;">8</div>
<div class="a" style="left:372px;top:387.81px;width:12px;height:12px;background:#393939;border-radius:2.5px"></div>
<div class="a" style="left:7px;top:408.64px;width:15px;height:15px;background:#34465c;border-radius:2px"></div>
<svg class="a" style="left:7px;top:408.64px;opacity:0.45" width="15" height="15" viewBox="0 0 15 15"><path d="M1.5 6.5V8.5M3.5 5V10M5.5 4V11M7.5 5.5V9.5M9.5 3.5V11.5M11.5 5V10M13.5 6.5V8.5" stroke="#fff" stroke-width="1"/></svg>
<div class="a" style="left:33.299999999999955px;top:410.44px;font-size:11.7px;color:#6c6c6c;white-space:nowrap;line-height:1;">Crunchy Filter Topper</div>
<div class="a" style="left:327px;top:410.44px;font-size:11.7px;color:#6c6c6c;white-space:nowrap;line-height:1;">8</div>
<div class="a" style="left:372px;top:409.14px;width:12px;height:12px;background:#393939;border-radius:2.5px"></div>
<svg class="a" style="left:304px;top:409.64px" width="14" height="14" viewBox="0 0 14 14"><circle cx="7" cy="7" r="5.8" fill="none" stroke="#8a8a8a" stroke-width="1" stroke-dasharray="30 6"/></svg>
<div class="a" style="left:7px;top:429.97px;width:15px;height:15px;background:#3a6aa6;border-radius:2px"></div>
<svg class="a" style="left:7px;top:429.97px;opacity:1" width="15" height="15" viewBox="0 0 15 15"><path d="M1.5 6.5V8.5M3.5 5V10M5.5 4V11M7.5 5.5V9.5M9.5 3.5V11.5M11.5 5V10M13.5 6.5V8.5" stroke="#fff" stroke-width="1"/></svg>
<div class="a" style="left:33.299999999999955px;top:431.77px;font-size:11.7px;color:#ebebeb;white-space:nowrap;line-height:1;">Crunchy Funk 01</div>
<div class="a" style="left:327px;top:431.77px;font-size:11.7px;color:#ebebeb;white-space:nowrap;line-height:1;">8</div>
<div class="a" style="left:372px;top:430.47px;width:12px;height:12px;background:#393939;border-radius:2.5px"></div>
<div class="a" style="left:7px;top:451.30px;width:15px;height:15px;background:#3a6aa6;border-radius:2px"></div>
<svg class="a" style="left:7px;top:451.30px;opacity:1" width="15" height="15" viewBox="0 0 15 15"><path d="M1.5 6.5V8.5M3.5 5V10M5.5 4V11M7.5 5.5V9.5M9.5 3.5V11.5M11.5 5V10M13.5 6.5V8.5" stroke="#fff" stroke-width="1"/></svg>
<div class="a" style="left:33.299999999999955px;top:453.0999999999999px;font-size:11.7px;color:#ebebeb;white-space:nowrap;line-height:1;">Crunchy Funk 02</div>
<div class="a" style="left:327px;top:453.0999999999999px;font-size:11.7px;color:#ebebeb;white-space:nowrap;line-height:1;">8</div>
<div class="a" style="left:372px;top:451.80px;width:12px;height:12px;background:#393939;border-radius:2.5px"></div>
<div class="a" style="left:7px;top:472.63px;width:15px;height:15px;background:#34465c;border-radius:2px"></div>
<svg class="a" style="left:7px;top:472.63px;opacity:0.45" width="15" height="15" viewBox="0 0 15 15"><path d="M1.5 6.5V8.5M3.5 5V10M5.5 4V11M7.5 5.5V9.5M9.5 3.5V11.5M11.5 5V10M13.5 6.5V8.5" stroke="#fff" stroke-width="1"/></svg>
<div class="a" style="left:33.299999999999955px;top:474.42999999999995px;font-size:11.7px;color:#6c6c6c;white-space:nowrap;line-height:1;">Crunchy Wobble Bass</div>
<div class="a" style="left:327px;top:474.42999999999995px;font-size:11.7px;color:#6c6c6c;white-space:nowrap;line-height:1;">8</div>
<div class="a" style="left:372px;top:473.13px;width:12px;height:12px;background:#393939;border-radius:2.5px"></div>
<svg class="a" style="left:304px;top:473.63px" width="14" height="14" viewBox="0 0 14 14"><circle cx="7" cy="7" r="5.8" fill="none" stroke="#c8c8c8" stroke-width="1"/><path d="M7 3.5V9.5M4.5 7.2L7 9.7L9.5 7.2" fill="none" stroke="#c8c8c8" stroke-width="1.1"/></svg>
<div class="a" style="left:7px;top:493.96px;width:15px;height:15px;background:#34465c;border-radius:2px"></div>
<svg class="a" style="left:7px;top:493.96px;opacity:0.45" width="15" height="15" viewBox="0 0 15 15"><path d="M1.5 6.5V8.5M3.5 5V10M5.5 4V11M7.5 5.5V9.5M9.5 3.5V11.5M11.5 5V10M13.5 6.5V8.5" stroke="#fff" stroke-width="1"/></svg>
<div class="a" style="left:33.299999999999955px;top:495.76px;font-size:11.7px;color:#6c6c6c;white-space:nowrap;line-height:1;">Crushed Beat</div>
<div class="a" style="left:327px;top:495.76px;font-size:11.7px;color:#6c6c6c;white-space:nowrap;line-height:1;">8</div>
<div class="a" style="left:372px;top:494.46px;width:12px;height:12px;background:#393939;border-radius:2.5px"></div>
<svg class="a" style="left:304px;top:494.96px" width="14" height="14" viewBox="0 0 14 14"><circle cx="7" cy="7" r="5.8" fill="none" stroke="#c8c8c8" stroke-width="1"/><path d="M7 3.5V9.5M4.5 7.2L7 9.7L9.5 7.2" fill="none" stroke="#c8c8c8" stroke-width="1.1"/></svg>
<div class="a" style="left:7px;top:515.29px;width:15px;height:15px;background:#34465c;border-radius:2px"></div>
<svg class="a" style="left:7px;top:515.29px;opacity:0.45" width="15" height="15" viewBox="0 0 15 15"><path d="M1.5 6.5V8.5M3.5 5V10M5.5 4V11M7.5 5.5V9.5M9.5 3.5V11.5M11.5 5V10M13.5 6.5V8.5" stroke="#fff" stroke-width="1"/></svg>
<div class="a" style="left:33.299999999999955px;top:517.0899999999999px;font-size:11.7px;color:#6c6c6c;white-space:nowrap;line-height:1;">Crystal Contact Beat 01</div>
<div class="a" style="left:327px;top:517.0899999999999px;font-size:11.7px;color:#6c6c6c;white-space:nowrap;line-height:1;">8</div>
<div class="a" style="left:372px;top:515.79px;width:12px;height:12px;background:#393939;border-radius:2.5px"></div>
<svg class="a" style="left:304px;top:516.29px" width="14" height="14" viewBox="0 0 14 14"><circle cx="7" cy="7" r="5.8" fill="none" stroke="#c8c8c8" stroke-width="1"/><path d="M7 3.5V9.5M4.5 7.2L7 9.7L9.5 7.2" fill="none" stroke="#c8c8c8" stroke-width="1.1"/></svg>
<div class="a" style="left:7px;top:536.62px;width:15px;height:15px;background:#34465c;border-radius:2px"></div>
<svg class="a" style="left:7px;top:536.62px;opacity:0.45" width="15" height="15" viewBox="0 0 15 15"><path d="M1.5 6.5V8.5M3.5 5V10M5.5 4V11M7.5 5.5V9.5M9.5 3.5V11.5M11.5 5V10M13.5 6.5V8.5" stroke="#fff" stroke-width="1"/></svg>
<div class="a" style="left:33.299999999999955px;top:538.42px;font-size:11.7px;color:#6c6c6c;white-space:nowrap;line-height:1;">Crystal Contact Beat 02</div>
<div class="a" style="left:327px;top:538.42px;font-size:11.7px;color:#6c6c6c;white-space:nowrap;line-height:1;">8</div>
<div class="a" style="left:372px;top:537.12px;width:12px;height:12px;background:#393939;border-radius:2.5px"></div>
<svg class="a" style="left:304px;top:537.62px" width="14" height="14" viewBox="0 0 14 14"><circle cx="7" cy="7" r="5.8" fill="none" stroke="#c8c8c8" stroke-width="1"/><path d="M7 3.5V9.5M4.5 7.2L7 9.7L9.5 7.2" fill="none" stroke="#c8c8c8" stroke-width="1.1"/></svg>
<div class="a" style="left:7px;top:557.95px;width:15px;height:15px;background:#34465c;border-radius:2px"></div>
<svg class="a" style="left:7px;top:557.95px;opacity:0.45" width="15" height="15" viewBox="0 0 15 15"><path d="M1.5 6.5V8.5M3.5 5V10M5.5 4V11M7.5 5.5V9.5M9.5 3.5V11.5M11.5 5V10M13.5 6.5V8.5" stroke="#fff" stroke-width="1"/></svg>
<div class="a" style="left:33.299999999999955px;top:559.75px;font-size:11.7px;color:#6c6c6c;white-space:nowrap;line-height:1;">Crystal Synth Chords</div>
<div class="a" style="left:327px;top:559.75px;font-size:11.7px;color:#6c6c6c;white-space:nowrap;line-height:1;">16</div>
<div class="a" style="left:372px;top:558.45px;width:12px;height:12px;background:#393939;border-radius:2.5px"></div>
<svg class="a" style="left:304px;top:558.95px" width="14" height="14" viewBox="0 0 14 14"><circle cx="7" cy="7" r="5.8" fill="none" stroke="#c8c8c8" stroke-width="1"/><path d="M7 3.5V9.5M4.5 7.2L7 9.7L9.5 7.2" fill="none" stroke="#c8c8c8" stroke-width="1.1"/></svg>
<div class="a" style="left:7px;top:579.28px;width:15px;height:15px;background:#3a6aa6;border-radius:2px"></div>
<svg class="a" style="left:7px;top:579.28px;opacity:1" width="15" height="15" viewBox="0 0 15 15"><path d="M1.5 6.5V8.5M3.5 5V10M5.5 4V11M7.5 5.5V9.5M9.5 3.5V11.5M11.5 5V10M13.5 6.5V8.5" stroke="#fff" stroke-width="1"/></svg>
<div class="a" style="left:33.299999999999955px;top:581.0799999999999px;font-size:11.7px;color:#ebebeb;white-space:nowrap;line-height:1;">Cuban Son Horns 01</div>
<div class="a" style="left:327px;top:581.0799999999999px;font-size:11.7px;color:#ebebeb;white-space:nowrap;line-height:1;">8</div>
<div class="a" style="left:372px;top:579.78px;width:12px;height:12px;background:#393939;border-radius:2.5px"></div>
<div class="a" style="left:7px;top:600.61px;width:15px;height:15px;background:#3a6aa6;border-radius:2px"></div>
<svg class="a" style="left:7px;top:600.61px;opacity:1" width="15" height="15" viewBox="0 0 15 15"><path d="M1.5 6.5V8.5M3.5 5V10M5.5 4V11M7.5 5.5V9.5M9.5 3.5V11.5M11.5 5V10M13.5 6.5V8.5" stroke="#fff" stroke-width="1"/></svg>
<div class="a" style="left:33.299999999999955px;top:602.4099999999999px;font-size:11.7px;color:#ebebeb;white-space:nowrap;line-height:1;">Cuban Son Sax 01</div>
<div class="a" style="left:327px;top:602.4099999999999px;font-size:11.7px;color:#ebebeb;white-space:nowrap;line-height:1;">8</div>
<div class="a" style="left:372px;top:601.11px;width:12px;height:12px;background:#393939;border-radius:2.5px"></div>
<div class="a" style="left:7px;top:621.94px;width:15px;height:15px;background:#3a6aa6;border-radius:2px"></div>
<svg class="a" style="left:7px;top:621.94px;opacity:1" width="15" height="15" viewBox="0 0 15 15"><path d="M1.5 6.5V8.5M3.5 5V10M5.5 4V11M7.5 5.5V9.5M9.5 3.5V11.5M11.5 5V10M13.5 6.5V8.5" stroke="#fff" stroke-width="1"/></svg>
<div class="a" style="left:33.299999999999955px;top:623.7399999999999px;font-size:11.7px;color:#ebebeb;white-space:nowrap;line-height:1;">Cuban Son Sax 02</div>
<div class="a" style="left:327px;top:623.7399999999999px;font-size:11.7px;color:#ebebeb;white-space:nowrap;line-height:1;">8</div>
<div class="a" style="left:372px;top:622.44px;width:12px;height:12px;background:#393939;border-radius:2.5px"></div>
<div class="a" style="left:2px;top:319px;width:387px;height:114px;border:2px solid #f0a030;border-radius:1px"></div>
<div class="a" style="left:0px;top:638px;width:391px;height:25px;background:#3e3e3e;border-top:1px solid #262626"></div>
<div class="a" style="left:8px;top:641px;width:29px;height:18px;background:#333;border-radius:3px;box-shadow:0 0 0 .5px #2a2a2a"></div>
<svg class="a" style="left:14px;top:644px" width="18" height="12" viewBox="0 0 18 12"><path d="M1 4H4L9 0.5V11.5L4 8H1z" fill="#fff"/><circle cx="12.5" cy="6" r="1.4" fill="#fff"/></svg>
<svg class="a" style="left:137px;top:645px" width="11" height="10" viewBox="0 0 11 10"><path d="M1 3.5H3.5L7.5 0.5V9.5L3.5 6.5H1z" fill="#fff"/></svg>
<div class="a" style="left:154px;top:648px;width:80px;height:4px;background:#262626;border-radius:2px"></div>
<div class="a" style="left:194px;top:644px;width:11px;height:11px;background:#a8a8a8;border-radius:50%"></div>
<svg class="a" style="left:240px;top:643px" width="16" height="14" viewBox="0 0 16 14"><path d="M1 4.5H3.5L7.5 1.5V12.5L3.5 9.5H1z" fill="#fff"/><path d="M9.5 4.5Q11 7 9.5 9.5M11.5 3Q13.5 7 11.5 11M13.5 1.5Q16 7 13.5 12.5" fill="none" stroke="#fff" stroke-width="1"/></svg>
<div class="a" style="left:321px;top:645px;font-size:12.5px;color:#a8a8a8;white-space:nowrap;line-height:1;">4689 items</div>
</div>
<!-- /BROWSER -->
<!-- EDITOR -->
<div class="a" style="left:13px;top:508px;width:860px;height:228px;background:#3d3d3d;border-radius:4px 4px 0 0;overflow:hidden;border-top:1px solid #1a1a1a">
<div class="a" style="left:0px;top:0px;width:860px;height:25px;background:#424242;border-bottom:1px solid #222"></div>
<div class="a" style="left:9px;top:5px;width:112px;height:18px;background:#333;border-radius:3px"></div>
<div class="a" style="left:9px;top:5px;width:52px;height:18px;background:#3b74b6;border-radius:3px 0 0 3px"></div>
<div class="a" style="left:18px;top:7.5px;font-size:12px;color:#f0f4fa;white-space:nowrap;line-height:1;">Track</div>
<div class="a" style="left:70px;top:7.5px;font-size:12px;color:#eeeeee;white-space:nowrap;line-height:1;">Master</div>
<div class="a" style="left:129px;top:5px;width:61px;height:18px;background:#393939;border-radius:3px"></div>
<div class="a" style="left:134px;top:7.5px;font-size:12px;color:#9a9a9a;white-space:nowrap;line-height:1;">Compare</div>
<div class="a" style="left:377px;top:5px;width:107px;height:18px;background:#333;border-radius:3px"></div>
<div class="a" style="left:377px;top:5px;width:67px;height:18px;background:#3b74b6;border-radius:3px 0 0 3px"></div>
<div class="a" style="left:385px;top:7.5px;font-size:12px;color:#f0f4fa;white-space:nowrap;line-height:1;">Controls</div>
<div class="a" style="left:453px;top:7.5px;font-size:12px;color:#eeeeee;white-space:nowrap;line-height:1;">EQ</div>
<div class="a" style="left:823px;top:5px;width:28px;height:18px;background:#333;border-radius:3px"></div>
<svg class="a" style="left:830px;top:7px" width="14" height="14" viewBox="0 0 14 14"><path d="M1.5 12.5L6 8" stroke="#eee" stroke-width="1.1"/><path d="M6 8L5 7L10.5 1.5M6 8L7 9L12.5 3.5" fill="none" stroke="#eee" stroke-width="1"/></svg>
<div class="a" style="left:0px;top:25px;width:290px;height:203px;background:#5f5f5f"></div>
<div class="a" style="left:13px;top:38px;width:265px;height:131px;background:#555;border-radius:5px"></div>
<svg class="a" style="left:20px;top:51px" width="10" height="8" viewBox="0 0 10 8"><path d="M0 0H10L5 8z" fill="#eee"/></svg>
<div class="a" style="left:34px;top:49px;font-size:12px;color:#f4f4f4;white-space:nowrap;line-height:1;-webkit-text-stroke:0.35px #f4f4f4">Recording Settings</div>
<div class="a" style="left:24px;top:73.5px;font-size:12px;color:#bdbdbd;white-space:nowrap;line-height:1;">Record Level:</div>
<div class="a" style="left:104px;top:80px;width:164px;height:3px;background:#383838;border-radius:2px"></div>
<div class="a" style="left:180px;top:76px;width:11px;height:11px;background:#a8a8a8;border-radius:50%"></div>
<div class="a" style="left:103px;top:90px;width:13px;height:13px;background:#4c4c4c;border-radius:3px"></div>
<div class="a" style="left:121px;top:90.5px;font-size:12px;color:#c4c4c4;white-space:nowrap;line-height:1;">Automatic Level Control</div>
<div class="a" style="left:68.5px;top:118px;font-size:12px;color:#bdbdbd;white-space:nowrap;line-height:1;">Input:</div>
<div class="a" style="left:103px;top:114.5px;width:165px;height:18px;background:#484848;border-radius:4px"></div>
<div class="a" style="left:126px;top:114.5px;width:1px;height:18px;background:#424242"></div>
<svg class="a" style="left:107px;top:117.5px" width="18" height="12" viewBox="0 0 18 12"><circle cx="6" cy="6" r="4.5" fill="none" stroke="#eee" stroke-width="1.1"/><circle cx="11" cy="6" r="4.5" fill="none" stroke="#eee" stroke-width="1.1"/></svg>
<div class="a" style="left:129px;top:118px;font-size:12px;color:#f0f0f0;white-space:nowrap;line-height:1;">1-2&nbsp; (Built-...icrophone)</div>
<svg class="a" style="left:255px;top:121.5px" width="9" height="6" viewBox="0 0 9 6"><path d="M1 1L4.5 4.5L8 1" fill="none" stroke="#ddd" stroke-width="1.1"/></svg>
<div class="a" style="left:37.5px;top:141px;font-size:12.3px;color:#bdbdbd;white-space:nowrap;line-height:1;">Monitoring:</div>
<div class="a" style="left:103px;top:139px;width:24px;height:18px;background:#484848;border-radius:4px"></div>
<svg class="a" style="left:107px;top:141px" width="16" height="14" viewBox="0 0 16 14"><circle cx="8" cy="4" r="2.6" fill="#eee"/><path d="M3.5 7.5Q8 11 12.5 7.5M2 9.5Q8 14 14 9.5" fill="none" stroke="#eee" stroke-width="1"/></svg>
<div class="a" style="left:13px;top:181px;width:265px;height:60px;background:#555;border-radius:5px"></div>
<div class="a" style="left:43px;top:192.5px;font-size:12px;color:#bdbdbd;white-space:nowrap;line-height:1;">Noise Gate:</div>
<div class="a" style="left:110.5px;top:194px;width:13px;height:13px;background:#4c4c4c;border-radius:3px"></div>
<div class="a" style="left:131px;top:200px;width:137px;height:3px;background:#484848;border-radius:2px"></div>
<div class="a" style="left:130.5px;top:196px;width:10px;height:10px;background:#8a8a8a;border-radius:50%"></div>
<svg class="a" style="left:21px;top:215px" width="8" height="10" viewBox="0 0 8 10"><path d="M0 0V10L8 5z" fill="#eee"/></svg>
<div class="a" style="left:34px;top:216px;font-size:12px;color:#f4f4f4;white-space:nowrap;line-height:1;-webkit-text-stroke:0.35px #f4f4f4">Plug-ins</div>
<div class="a" style="left:290px;top:25px;width:1px;height:203px;background:#1e1e1e"></div>
<div class="a" style="left:291px;top:25px;width:569px;height:11px;background:#2f2f2f"></div>
<div class="a" style="left:291px;top:36px;width:569px;height:184px;background:linear-gradient(90deg,rgba(90,140,200,.25),rgba(0,0,0,0) 12%,rgba(0,0,0,0) 85%,rgba(90,140,200,.15)),linear-gradient(#3a6898,#2f5e8c 30%,#284f7a 48%,#23456a 62%,#1d3b5e 85%,#1a3656)"></div>
<div class="a" style="left:291px;top:220px;width:569px;height:8px;background:#2a2a2a"></div>
<svg class="a" style="left:291px;top:36px" width="569" height="184" viewBox="304 544 569 184"><g transform="translate(426,562) scale(0.76,1)"><text x="0" y="0" text-anchor="middle" font-family="Liberation Sans" font-size="12" fill="#eef3f8" letter-spacing="0.6">COMPRESSOR</text></g><g transform="translate(602.5,562) scale(0.82,1)"><text x="0" y="0" text-anchor="middle" font-family="Liberation Sans" font-size="12" fill="#eef3f8">EQ</text></g><g transform="translate(766.5,562) scale(0.76,1)"><text x="0" y="0" text-anchor="middle" font-family="Liberation Sans" font-size="12" fill="#eef3f8" letter-spacing="0.6">SENDS</text></g><rect x="377.5" y="570.5" width="96.5" height="149" rx="3" fill="none" stroke="#a9c3df" stroke-width="1.1" opacity=".8"/><rect x="485" y="570.5" width="235.5" height="149" rx="3" fill="none" stroke="#a9c3df" stroke-width="1.1" opacity=".8"/><g transform="translate(417,582) scale(0.9,1)"><text x="0" y="0" text-anchor="middle" font-family="Liberation Sans" font-size="8.4" fill="#e8eef5" stroke="#e8eef5" stroke-width="0.25">AMOUNT</text></g><g transform="translate(524,582) scale(0.9,1)"><text x="0" y="0" text-anchor="middle" font-family="Liberation Sans" font-size="8.4" fill="#e8eef5" stroke="#e8eef5" stroke-width="0.25">LOW</text></g><g transform="translate(602.5,582) scale(0.9,1)"><text x="0" y="0" text-anchor="middle" font-family="Liberation Sans" font-size="8.4" fill="#e8eef5" stroke="#e8eef5" stroke-width="0.25">MID</text></g><g transform="translate(680.5,582) scale(0.9,1)"><text x="0" y="0" text-anchor="middle" font-family="Liberation Sans" font-size="8.4" fill="#e8eef5" stroke="#e8eef5" stroke-width="0.25">HIGH</text></g><g transform="translate(602.5,655) scale(0.9,1)"><text x="0" y="0" text-anchor="middle" font-family="Liberation Sans" font-size="8.4" fill="#e8eef5" stroke="#e8eef5" stroke-width="0.25">MID FREQ</text></g><g transform="translate(680.5,655) scale(0.9,1)"><text x="0" y="0" text-anchor="middle" font-family="Liberation Sans" font-size="8.4" fill="#e8eef5" stroke="#e8eef5" stroke-width="0.25">LOW CUT</text></g><g transform="translate(766.5,582) scale(0.9,1)"><text x="0" y="0" text-anchor="middle" font-family="Liberation Sans" font-size="8.4" fill="#e8eef5" stroke="#e8eef5" stroke-width="0.25">AMBIENCE</text></g><g transform="translate(766.5,655) scale(0.9,1)"><text x="0" y="0" text-anchor="middle" font-family="Liberation Sans" font-size="8.4" fill="#e8eef5" stroke="#e8eef5" stroke-width="0.25">REVERB</text></g><path d="M398.6 631.4L395.8 634.2" stroke="#c8d8ea" stroke-width="1"/><path d="M392.3 621.0L388.5 622.3" stroke="#c8d8ea" stroke-width="1"/><path d="M391.3 608.9L387.4 608.3" stroke="#c8d8ea" stroke-width="1"/><path d="M396.0 597.7L392.7 595.4" stroke="#c8d8ea" stroke-width="1"/><path d="M405.2 589.8L403.4 586.3" stroke="#c8d8ea" stroke-width="1"/><path d="M417.0 587.0L417.0 583.0" stroke="#c8d8ea" stroke-width="1"/><path d="M428.8 589.8L430.6 586.3" stroke="#c8d8ea" stroke-width="1"/><path d="M438.0 597.7L441.3 595.4" stroke="#c8d8ea" stroke-width="1"/><path d="M442.7 608.9L446.6 608.3" stroke="#c8d8ea" stroke-width="1"/><path d="M441.7 621.0L445.5 622.3" stroke="#c8d8ea" stroke-width="1"/><path d="M435.4 631.4L438.2 634.2" stroke="#c8d8ea" stroke-width="1"/><circle cx="417" cy="614.5" r="23.5" fill="#0c1a2a" opacity=".55"/><circle cx="417" cy="613" r="22.5" fill="#1e1e1f"/><g transform="rotate(-60 417 613)"><rect x="410" y="590.5" width="14" height="45.0" fill="#242425"/><path d="M409.5 591.5V634.5M424.5 591.5V634.5" stroke="#0b0b0b" stroke-width="2"/><path d="M417 592.0V607" stroke="#d8d8d8" stroke-width="1.6"/></g><path d="M505.6 631.4L502.8 634.2" stroke="#c8d8ea" stroke-width="1"/><path d="M499.3 621.0L495.5 622.3" stroke="#c8d8ea" stroke-width="1"/><path d="M498.3 608.9L494.4 608.3" stroke="#c8d8ea" stroke-width="1"/><path d="M503.0 597.7L499.7 595.4" stroke="#c8d8ea" stroke-width="1"/><path d="M512.2 589.8L510.4 586.3" stroke="#c8d8ea" stroke-width="1"/><path d="M524.0 587.0L524.0 583.0" stroke="#c8d8ea" stroke-width="1"/><path d="M535.8 589.8L537.6 586.3" stroke="#c8d8ea" stroke-width="1"/><path d="M545.0 597.7L548.3 595.4" stroke="#c8d8ea" stroke-width="1"/><path d="M549.7 608.9L553.6 608.3" stroke="#c8d8ea" stroke-width="1"/><path d="M548.7 621.0L552.5 622.3" stroke="#c8d8ea" stroke-width="1"/><path d="M542.4 631.4L545.2 634.2" stroke="#c8d8ea" stroke-width="1"/><circle cx="524" cy="614.5" r="23.5" fill="#0c1a2a" opacity=".55"/><circle cx="524" cy="613" r="22.5" fill="#1e1e1f"/><g transform="rotate(0 524 613)"><rect x="517" y="590.5" width="14" height="45.0" fill="#242425"/><path d="M516.5 591.5V634.5M531.5 591.5V634.5" stroke="#0b0b0b" stroke-width="2"/><path d="M524 592.0V607" stroke="#d8d8d8" stroke-width="1.6"/></g><path d="M584.1 631.4L581.3 634.2" stroke="#c8d8ea" stroke-width="1"/><path d="M577.8 621.0L574.0 622.3" stroke="#c8d8ea" stroke-width="1"/><path d="M576.8 608.9L572.9 608.3" stroke="#c8d8ea" stroke-width="1"/><path d="M581.5 597.7L578.2 595.4" stroke="#c8d8ea" stroke-width="1"/><path d="M590.7 589.8L588.9 586.3" stroke="#c8d8ea" stroke-width="1"/><path d="M602.5 587.0L602.5 583.0" stroke="#c8d8ea" stroke-width="1"/><path d="M614.3 589.8L616.1 586.3" stroke="#c8d8ea" stroke-width="1"/><path d="M623.5 597.7L626.8 595.4" stroke="#c8d8ea" stroke-width="1"/><path d="M628.2 608.9L632.1 608.3" stroke="#c8d8ea" stroke-width="1"/><path d="M627.2 621.0L631.0 622.3" stroke="#c8d8ea" stroke-width="1"/><path d="M620.9 631.4L623.7 634.2" stroke="#c8d8ea" stroke-width="1"/><circle cx="602.5" cy="614.5" r="23.5" fill="#0c1a2a" opacity=".55"/><circle cx="602.5" cy="613" r="22.5" fill="#1e1e1f"/><g transform="rotate(0 602.5 613)"><rect x="595.5" y="590.5" width="14" height="45.0" fill="#242425"/><path d="M595.0 591.5V634.5M610.0 591.5V634.5" stroke="#0b0b0b" stroke-width="2"/><path d="M602.5 592.0V607" stroke="#d8d8d8" stroke-width="1.6"/></g><path d="M662.1 631.4L659.3 634.2" stroke="#c8d8ea" stroke-width="1"/><path d="M655.8 621.0L652.0 622.3" stroke="#c8d8ea" stroke-width="1"/><path d="M654.8 608.9L650.9 608.3" stroke="#c8d8ea" stroke-width="1"/><path d="M659.5 597.7L656.2 595.4" stroke="#c8d8ea" stroke-width="1"/><path d="M668.7 589.8L666.9 586.3" stroke="#c8d8ea" stroke-width="1"/><path d="M680.5 587.0L680.5 583.0" stroke="#c8d8ea" stroke-width="1"/><path d="M692.3 589.8L694.1 586.3" stroke="#c8d8ea" stroke-width="1"/><path d="M701.5 597.7L704.8 595.4" stroke="#c8d8ea" stroke-width="1"/><path d="M706.2 608.9L710.1 608.3" stroke="#c8d8ea" stroke-width="1"/><path d="M705.2 621.0L709.0 622.3" stroke="#c8d8ea" stroke-width="1"/><path d="M698.9 631.4L701.7 634.2" stroke="#c8d8ea" stroke-width="1"/><circle cx="680.5" cy="614.5" r="23.5" fill="#0c1a2a" opacity=".55"/><circle cx="680.5" cy="613" r="22.5" fill="#1e1e1f"/><g transform="rotate(0 680.5 613)"><rect x="673.5" y="590.5" width="14" height="45.0" fill="#242425"/><path d="M673.0 591.5V634.5M688.0 591.5V634.5" stroke="#0b0b0b" stroke-width="2"/><path d="M680.5 592.0V607" stroke="#d8d8d8" stroke-width="1.6"/></g><path d="M584.1 704.4L581.3 707.2" stroke="#c8d8ea" stroke-width="1"/><path d="M577.8 694.0L574.0 695.3" stroke="#c8d8ea" stroke-width="1"/><path d="M576.8 681.9L572.9 681.3" stroke="#c8d8ea" stroke-width="1"/><path d="M581.5 670.7L578.2 668.4" stroke="#c8d8ea" stroke-width="1"/><path d="M590.7 662.8L588.9 659.3" stroke="#c8d8ea" stroke-width="1"/><path d="M602.5 660.0L602.5 656.0" stroke="#c8d8ea" stroke-width="1"/><path d="M614.3 662.8L616.1 659.3" stroke="#c8d8ea" stroke-width="1"/><path d="M623.5 670.7L626.8 668.4" stroke="#c8d8ea" stroke-width="1"/><path d="M628.2 681.9L632.1 681.3" stroke="#c8d8ea" stroke-width="1"/><path d="M627.2 694.0L631.0 695.3" stroke="#c8d8ea" stroke-width="1"/><path d="M620.9 704.4L623.7 707.2" stroke="#c8d8ea" stroke-width="1"/><circle cx="602.5" cy="687.5" r="23.5" fill="#0c1a2a" opacity=".55"/><circle cx="602.5" cy="686" r="22.5" fill="#1e1e1f"/><g transform="rotate(-60 602.5 686)"><rect x="595.5" y="663.5" width="14" height="45.0" fill="#242425"/><path d="M595.0 664.5V707.5M610.0 664.5V707.5" stroke="#0b0b0b" stroke-width="2"/><path d="M602.5 665.0V680" stroke="#d8d8d8" stroke-width="1.6"/></g><path d="M662.1 704.4L659.3 707.2" stroke="#c8d8ea" stroke-width="1"/><path d="M655.8 694.0L652.0 695.3" stroke="#c8d8ea" stroke-width="1"/><path d="M654.8 681.9L650.9 681.3" stroke="#c8d8ea" stroke-width="1"/><path d="M659.5 670.7L656.2 668.4" stroke="#c8d8ea" stroke-width="1"/><path d="M668.7 662.8L666.9 659.3" stroke="#c8d8ea" stroke-width="1"/><path d="M680.5 660.0L680.5 656.0" stroke="#c8d8ea" stroke-width="1"/><path d="M692.3 662.8L694.1 659.3" stroke="#c8d8ea" stroke-width="1"/><path d="M701.5 670.7L704.8 668.4" stroke="#c8d8ea" stroke-width="1"/><path d="M706.2 681.9L710.1 681.3" stroke="#c8d8ea" stroke-width="1"/><path d="M705.2 694.0L709.0 695.3" stroke="#c8d8ea" stroke-width="1"/><path d="M698.9 704.4L701.7 707.2" stroke="#c8d8ea" stroke-width="1"/><circle cx="680.5" cy="687.5" r="23.5" fill="#0c1a2a" opacity=".55"/><circle cx="680.5" cy="686" r="22.5" fill="#1e1e1f"/><g transform="rotate(-150 680.5 686)"><rect x="673.5" y="663.5" width="14" height="45.0" fill="#242425"/><path d="M673.0 664.5V707.5M688.0 664.5V707.5" stroke="#0b0b0b" stroke-width="2"/><path d="M680.5 665.0V680" stroke="#d8d8d8" stroke-width="1.6"/></g><path d="M748.1 631.4L745.3 634.2" stroke="#c8d8ea" stroke-width="1"/><path d="M741.8 621.0L738.0 622.3" stroke="#c8d8ea" stroke-width="1"/><path d="M740.8 608.9L736.9 608.3" stroke="#c8d8ea" stroke-width="1"/><path d="M745.5 597.7L742.2 595.4" stroke="#c8d8ea" stroke-width="1"/><path d="M754.7 589.8L752.9 586.3" stroke="#c8d8ea" stroke-width="1"/><path d="M766.5 587.0L766.5 583.0" stroke="#c8d8ea" stroke-width="1"/><path d="M778.3 589.8L780.1 586.3" stroke="#c8d8ea" stroke-width="1"/><path d="M787.5 597.7L790.8 595.4" stroke="#c8d8ea" stroke-width="1"/><path d="M792.2 608.9L796.1 608.3" stroke="#c8d8ea" stroke-width="1"/><path d="M791.2 621.0L795.0 622.3" stroke="#c8d8ea" stroke-width="1"/><path d="M784.9 631.4L787.7 634.2" stroke="#c8d8ea" stroke-width="1"/><circle cx="766.5" cy="614.5" r="23.5" fill="#0c1a2a" opacity=".55"/><circle cx="766.5" cy="613" r="22.5" fill="#1e1e1f"/><g transform="rotate(-150 766.5 613)"><rect x="759.5" y="590.5" width="14" height="45.0" fill="#242425"/><path d="M759.0 591.5V634.5M774.0 591.5V634.5" stroke="#0b0b0b" stroke-width="2"/><path d="M766.5 592.0V607" stroke="#d8d8d8" stroke-width="1.6"/></g><path d="M748.1 704.4L745.3 707.2" stroke="#c8d8ea" stroke-width="1"/><path d="M741.8 694.0L738.0 695.3" stroke="#c8d8ea" stroke-width="1"/><path d="M740.8 681.9L736.9 681.3" stroke="#c8d8ea" stroke-width="1"/><path d="M745.5 670.7L742.2 668.4" stroke="#c8d8ea" stroke-width="1"/><path d="M754.7 662.8L752.9 659.3" stroke="#c8d8ea" stroke-width="1"/><path d="M766.5 660.0L766.5 656.0" stroke="#c8d8ea" stroke-width="1"/><path d="M778.3 662.8L780.1 659.3" stroke="#c8d8ea" stroke-width="1"/><path d="M787.5 670.7L790.8 668.4" stroke="#c8d8ea" stroke-width="1"/><path d="M792.2 681.9L796.1 681.3" stroke="#c8d8ea" stroke-width="1"/><path d="M791.2 694.0L795.0 695.3" stroke="#c8d8ea" stroke-width="1"/><path d="M784.9 704.4L787.7 707.2" stroke="#c8d8ea" stroke-width="1"/><circle cx="766.5" cy="687.5" r="23.5" fill="#0c1a2a" opacity=".55"/><circle cx="766.5" cy="686" r="22.5" fill="#1e1e1f"/><g transform="rotate(-150 766.5 686)"><rect x="759.5" y="663.5" width="14" height="45.0" fill="#242425"/><path d="M759.0 664.5V707.5M774.0 664.5V707.5" stroke="#0b0b0b" stroke-width="2"/><path d="M766.5 665.0V680" stroke="#d8d8d8" stroke-width="1.6"/></g><circle cx="458" cy="587.0" r="4.6" fill="#0a0a0c"/><circle cx="458" cy="585.5" r="2" fill="#333" opacity=".5"/><circle cx="458" cy="600.2" r="4.6" fill="#0a0a0c"/><circle cx="458" cy="598.7" r="2" fill="#333" opacity=".5"/><circle cx="458" cy="613.4" r="4.6" fill="#0a0a0c"/><circle cx="458" cy="611.9" r="2" fill="#333" opacity=".5"/><circle cx="458" cy="626.6" r="4.6" fill="#0a0a0c"/><circle cx="458" cy="625.1" r="2" fill="#333" opacity=".5"/><circle cx="458" cy="639.8" r="4.6" fill="#0a0a0c"/><circle cx="458" cy="638.3" r="2" fill="#333" opacity=".5"/><circle cx="458" cy="653.0" r="4.6" fill="#0a0a0c"/><circle cx="458" cy="651.5" r="2" fill="#333" opacity=".5"/><circle cx="458" cy="666.2" r="4.6" fill="#0a0a0c"/><circle cx="458" cy="664.7" r="2" fill="#333" opacity=".5"/><circle cx="458" cy="679.4" r="4.6" fill="#0a0a0c"/><circle cx="458" cy="677.9" r="2" fill="#333" opacity=".5"/><circle cx="458" cy="692.6" r="4.6" fill="#0a0a0c"/><circle cx="458" cy="691.1" r="2" fill="#333" opacity=".5"/><circle cx="458" cy="705.8" r="4.6" fill="#0a0a0c"/><circle cx="458" cy="704.3" r="2" fill="#333" opacity=".5"/><circle cx="417" cy="662.5" r="5" fill="#0a0a0c"/><circle cx="524" cy="662.5" r="4.8" fill="#2a7de8"/><circle cx="524" cy="661" r="2.5" fill="#8fc0ff" opacity=".7"/><rect x="407" y="675" width="20" height="22" rx="7" fill="#d4d6da" stroke="#55595f" stroke-width="0.8"/><rect x="410" y="678" width="14" height="16" rx="5" fill="#9a9ea5"/><circle cx="417" cy="686" r="5.5" fill="#1c1c1e"/><rect x="415.2" y="685" width="3.6" height="11" rx="1.8" fill="#c0c2c6"/><rect x="514" y="675" width="20" height="22" rx="7" fill="#d4d6da" stroke="#55595f" stroke-width="0.8"/><rect x="517" y="678" width="14" height="16" rx="5" fill="#9a9ea5"/><circle cx="524" cy="686" r="5.5" fill="#1c1c1e"/><rect x="522.2" y="685" width="3.6" height="11" rx="1.8" fill="#c0c2c6"/><circle cx="314.5" cy="571.7" r="7.2" fill="#101010"/><circle cx="314.5" cy="571.7" r="5.8" fill="#3a3631"/><path d="M310.7 567.9000000000001L318.3 575.5M318.3 567.9000000000001L310.7 575.5" stroke="#0a0a0a" stroke-width="2"/><circle cx="314.5" cy="697.5" r="7.2" fill="#101010"/><circle cx="314.5" cy="697.5" r="5.8" fill="#3a3631"/><path d="M310.7 693.7L318.3 701.3M318.3 693.7L310.7 701.3" stroke="#0a0a0a" stroke-width="2"/><circle cx="862" cy="571.7" r="7.2" fill="#101010"/><circle cx="862" cy="571.7" r="5.8" fill="#3a3631"/><path d="M858.2 567.9000000000001L865.8 575.5M865.8 567.9000000000001L858.2 575.5" stroke="#0a0a0a" stroke-width="2"/><circle cx="862" cy="698" r="7.2" fill="#101010"/><circle cx="862" cy="698" r="5.8" fill="#3a3631"/><path d="M858.2 694.2L865.8 701.8M865.8 694.2L858.2 701.8" stroke="#0a0a0a" stroke-width="2"/></svg>
</div>
<!-- /EDITOR -->
<!-- wood -->
<div class="a wood" style="left:0;top:72px;width:11px;height:667px"></div><div class="a" style="left:11px;top:72px;width:2px;height:667px;background:#a89c92"></div>
<div class="a wood" style="left:1270px;top:72px;width:10px;height:667px"></div>
</body></html>
